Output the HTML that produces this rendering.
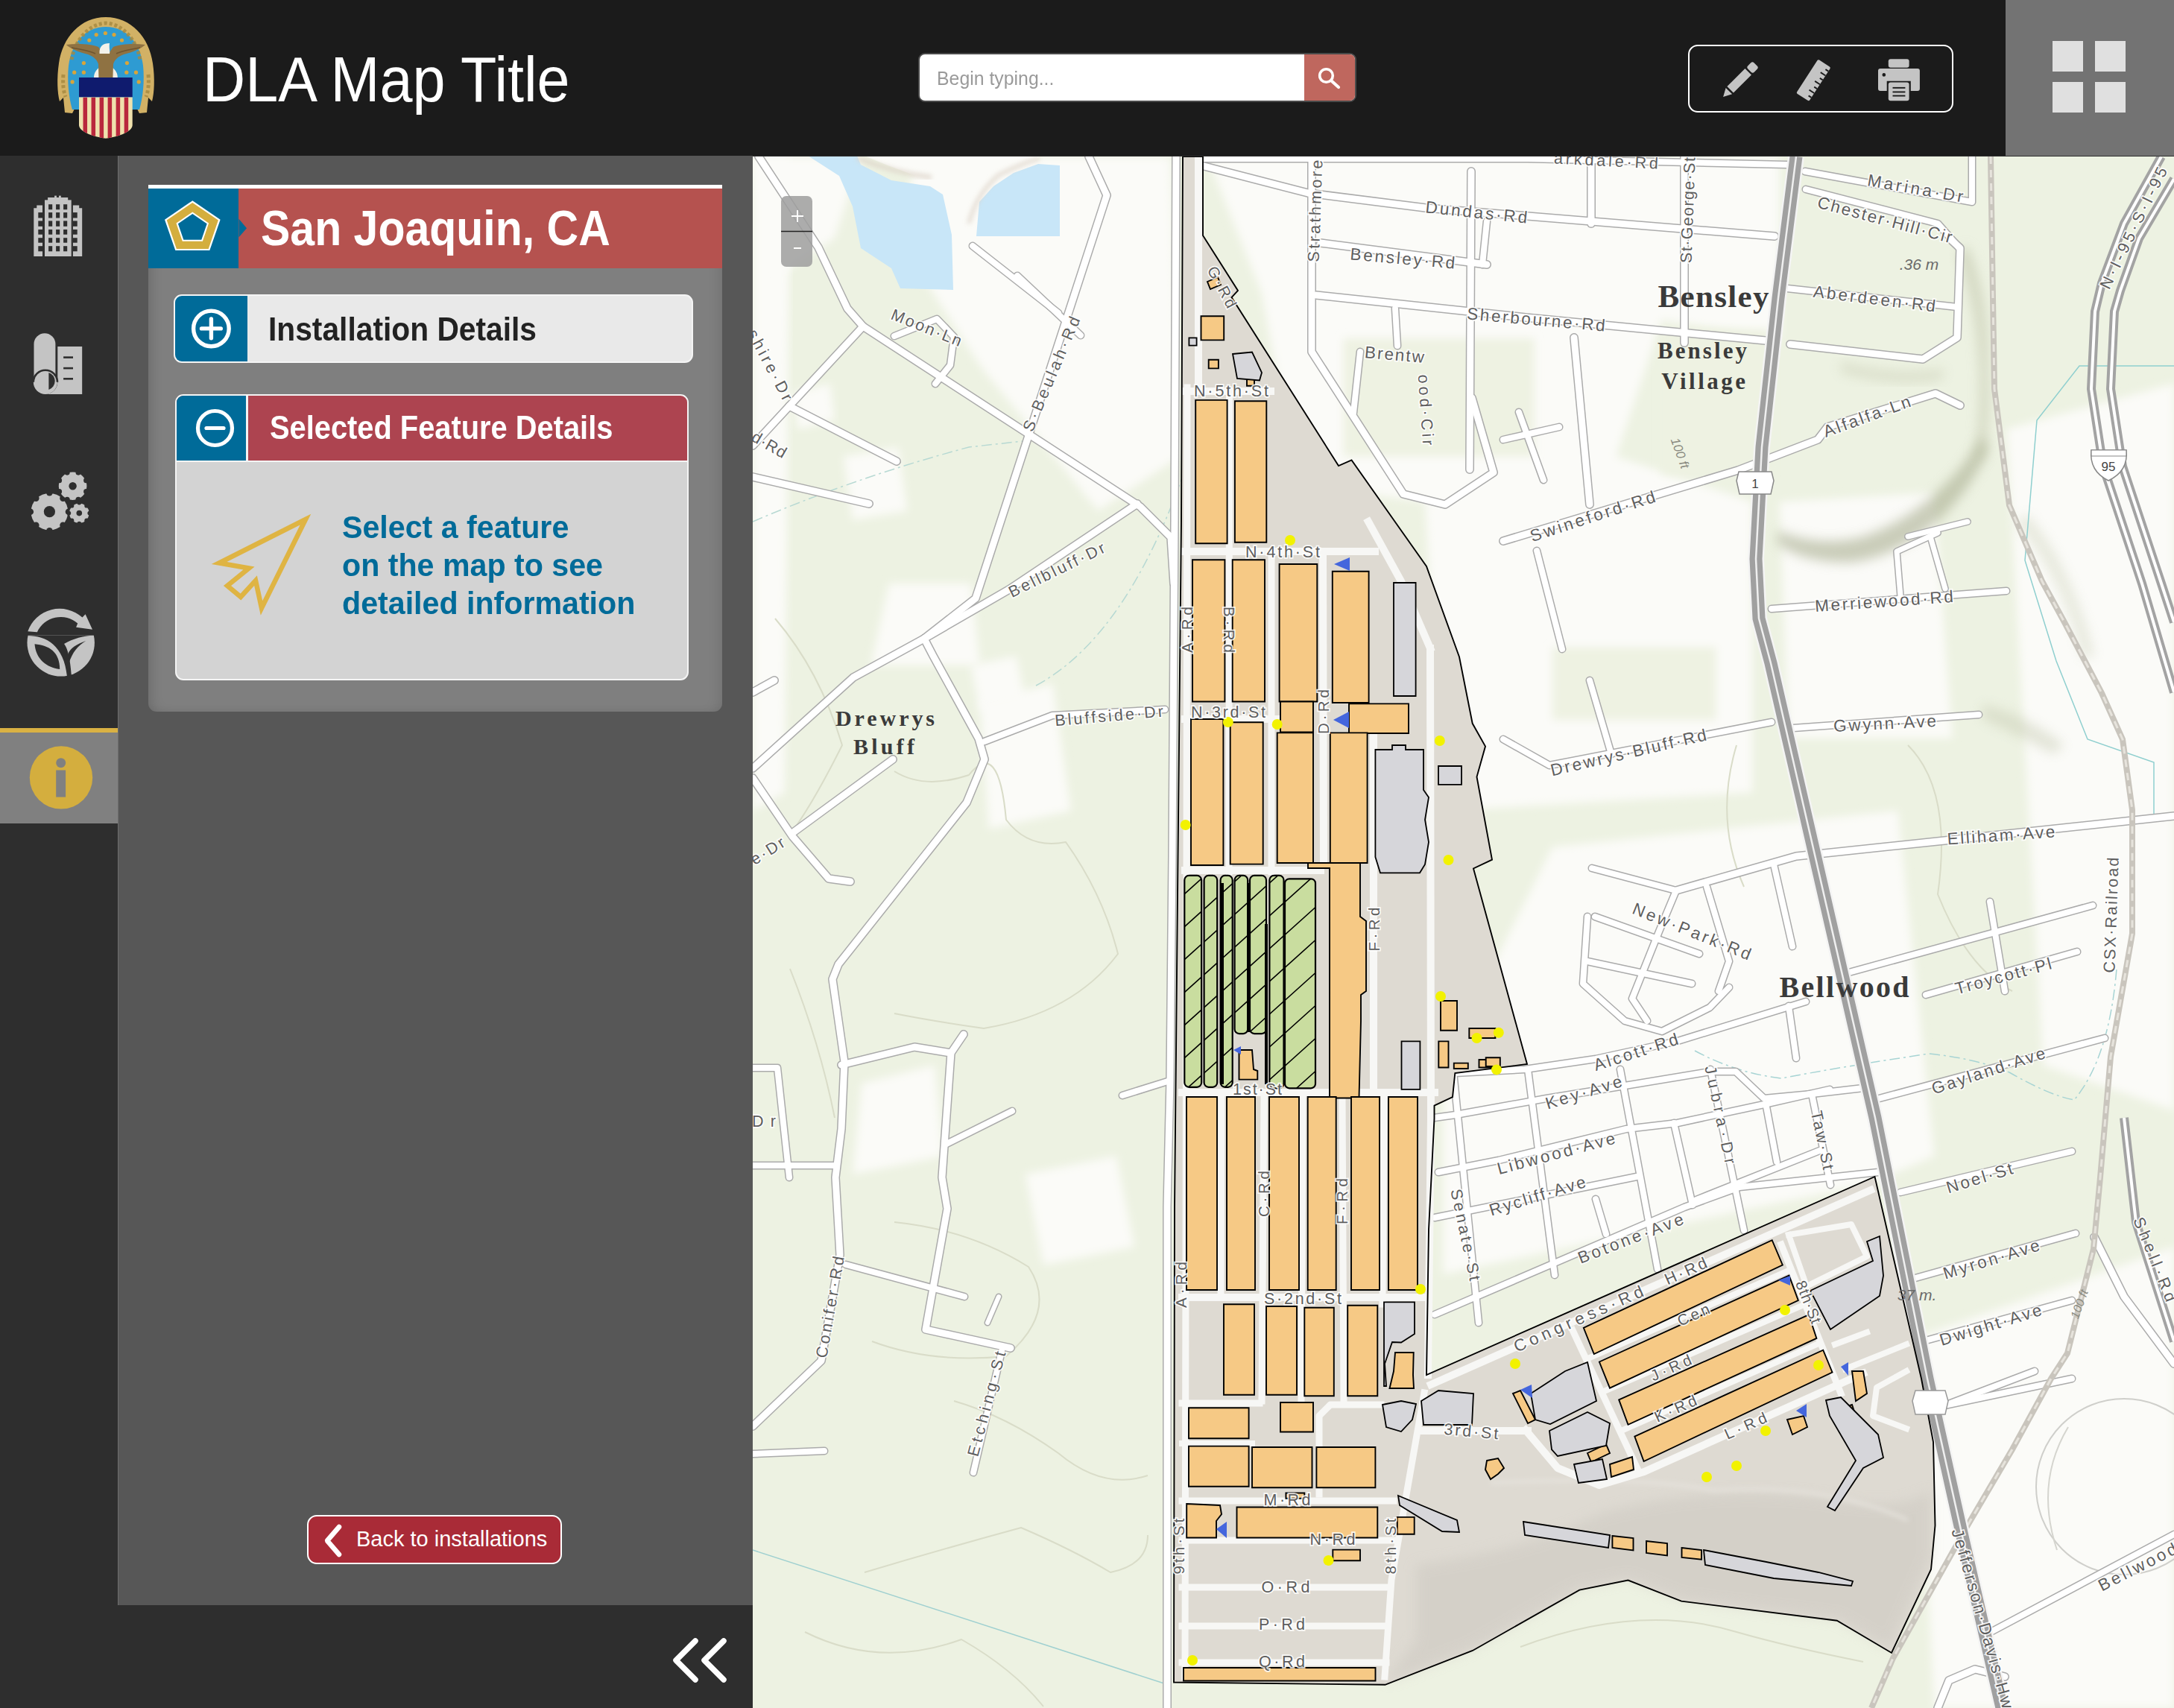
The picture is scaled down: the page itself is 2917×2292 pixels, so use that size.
<!DOCTYPE html>
<html><head><meta charset="utf-8">
<style>
*{margin:0;padding:0;box-sizing:border-box}
html,body{width:2917px;height:2292px;overflow:hidden;background:#2e2e2e;font-family:"Liberation Sans",sans-serif}
.abs{position:absolute}
#header{left:0;top:0;width:2691px;height:209px;background:#1b1b1b}
#grid{left:2691px;top:0;width:226px;height:209px;background:#737373}
#grid div{position:absolute;width:41px;height:41px;background:#e0e0e0}
#title{left:272px;top:56px;font-size:86px;color:#fff;white-space:nowrap;line-height:100px;transform:scaleX(0.92);transform-origin:0 0}
#search{left:1232px;top:71px;width:588px;height:66px;background:#fff;border:2px solid #4a4a4a;border-radius:9px;overflow:hidden}
#search .ph{position:absolute;left:22.6px;top:16px;font-size:25.5px;color:#9a9a9a;line-height:32px;white-space:nowrap;transform:scaleX(0.974);transform-origin:0 0}
#search .btn{position:absolute;right:0;top:0;width:68px;height:62px;background:#bf675e}
#tools{left:2265px;top:60px;width:356px;height:91px;border:2.5px solid #fff;border-radius:13px}
#sidebar{left:0;top:209px;width:158px;height:1945px;background:#2e2e2e}
#active{left:0;top:977px;width:158px;height:128px;background:#808080;border-top:6px solid #d9b143}
#panel{left:158px;top:209px;width:852px;height:1945px;background:#575757;border-left:1.5px solid #6e6e6e}
#card{left:199px;top:248px;width:770px;height:707px;background:#7f7f7f;border-radius:0 0 11px 11px;border-top:5px solid #fff;box-shadow:inset 10px 0 18px -8px rgba(0,0,0,0.18),inset -10px 0 18px -8px rgba(0,0,0,0.12)}
#cardhead{left:320px;top:253px;width:649px;height:107px;background:#b5524f}
#cardblue{left:199px;top:253px;width:121px;height:107px;background:#006b99}
#sanj{left:350px;top:266px;font-size:66px;font-weight:bold;color:#fff;white-space:nowrap;line-height:80px;transform:scaleX(0.894);transform-origin:0 0}
#inst{left:233px;top:395px;width:697px;height:92px;background:#e9e9e9;border:2px solid #f4f4f4;border-radius:11px;overflow:hidden}
#inst .blue{position:absolute;left:0;top:0;width:97px;height:100%;background:#006b99}
#inst .t{position:absolute;left:125px;top:20px;font-size:44px;font-weight:bold;color:#222;white-space:nowrap;line-height:50px;transform:scaleX(0.926);transform-origin:0 0}
#sel{left:235px;top:529px;width:689px;height:384px;background:#d3d3d3;border:2px solid #f4f4f4;border-radius:11px;overflow:hidden}
#sel .head{position:absolute;left:0;top:0;width:100%;height:89px;background:#ad4450;border-bottom:2px solid #f4f4f4}
#sel .blue{position:absolute;left:0;top:0;width:96px;height:87px;background:#006b99;border-right:3px solid #f4f4f4}
#sel .t{position:absolute;left:125px;top:18px;font-size:44px;font-weight:bold;color:#fff;white-space:nowrap;line-height:50px;transform:scaleX(0.905);transform-origin:0 0}
#seltext{left:459px;top:682px;font-size:42px;font-weight:bold;color:#006b99;line-height:51px;white-space:nowrap;transform:scaleX(0.98);transform-origin:0 0}
#back{left:412px;top:2033px;width:342px;height:66px;background:#a92b37;border:2.5px solid #fff;border-radius:13px}
#back .t{position:absolute;left:64px;top:14px;font-size:29px;color:#fff;white-space:nowrap;line-height:32px}
#map{left:1010px;top:210px;width:1907px;height:2082px;background:#f2f4ea;overflow:hidden}
</style></head><body>
<div id="header" class="abs"></div>
<div id="grid" class="abs">
  <div style="left:63px;top:55px"></div><div style="left:120px;top:55px"></div>
  <div style="left:63px;top:110px"></div><div style="left:120px;top:110px"></div>
</div>
<div id="title" class="abs">DLA Map Title</div>
<div id="search" class="abs"><div class="ph">Begin typing...</div><div class="btn"></div></div>
<div id="tools" class="abs"></div>
<div id="sidebar" class="abs"></div>
<div id="active" class="abs"></div>
<div id="panel" class="abs"></div>
<div id="card" class="abs"></div>
<div id="cardhead" class="abs"></div>
<div id="cardblue" class="abs"></div>
<div id="sanj" class="abs">San Joaquin, CA</div>
<div id="inst" class="abs"><div class="blue"></div><div class="t">Installation Details</div></div>
<div id="sel" class="abs"><div class="head"></div><div class="blue"></div><div class="t">Selected Feature Details</div></div>
<div id="seltext" class="abs">Select a feature<br>on the map to see<br>detailed information</div>
<div id="back" class="abs"><div class="t">Back to installations</div></div>
<div id="map" class="abs"><svg width="1907" height="2082" viewBox="1010 210 1907 2082" style="display:block"><defs><filter id="soft" x="-10%" y="-10%" width="120%" height="120%"><feGaussianBlur stdDeviation="6"/></filter><filter id="blur8" x="-20%" y="-20%" width="140%" height="140%"><feGaussianBlur stdDeviation="8"/></filter><filter id="blur3"><feGaussianBlur stdDeviation="3"/></filter></defs><rect x="1010" y="210" width="1907" height="2082" fill="#edf2e2"/><path d="M1010.0 210.0 L1058.8 210.0 L1058.8 356.3 L1052.7 1063.6 L1010.0 1087.9Z" fill="#fbfbf8" filter="url(#soft)"/><path d="M1010.0 210.0 L1156.3 210.0 L1119.7 319.7 L1046.6 368.5Z" fill="#fbfbf8" filter="url(#soft)"/><path d="M1229.5 210.0 L1570.9 210.0 L1583.1 612.4 L1473.4 685.6 L1314.8 490.5 L1205.1 319.7Z" fill="#fbfbf8" filter="url(#soft)"/><path d="M1064.9 527.0 L1113.6 514.8 L1119.7 563.6 L1071.0 575.8Z" fill="#fbfbf8" filter="url(#soft)"/><path d="M1131.9 612.4 L1205.1 600.2 L1217.3 685.6 L1144.1 697.7Z" fill="#fbfbf8" filter="url(#soft)"/><path d="M1302.6 892.8 L1363.6 880.6 L1375.8 941.6 L1314.8 953.8Z" fill="#fbfbf8" filter="url(#soft)"/><path d="M1192.9 783.1 L1302.6 783.1 L1314.8 892.8 L1168.5 892.8Z" fill="#fbfbf8" filter="url(#soft)"/><path d="M1619.7 210.0 L2387.9 210.0 L2387.9 453.9 L2229.4 429.5 L2168.4 612.4 L2351.3 673.4 L2351.3 1063.6 L1936.7 1087.9 L1912.3 673.4 L1741.6 649.0 L1692.8 392.9Z" fill="#fbfbf8" filter="url(#soft)"/><path d="M2387.9 673.4 L2595.2 661.2 L2619.6 990.4 L2400.1 990.4Z" fill="#fbfbf8" filter="url(#soft)"/><path d="M2083.0 1136.7 L2546.4 1087.9 L2595.2 1551.3 L2509.8 1587.9 L1936.7 1709.8 L1936.7 1429.4Z" fill="#fbfbf8" filter="url(#soft)"/><path d="M2692.7 575.8 L2917.1 514.8 L2917.1 1490.3 L2741.5 1429.4Z" fill="#fbfbf8" filter="url(#soft)"/><path d="M2570.8 1795.2 L2917.1 1673.2 L2917.1 2292.7 L2595.2 2292.7Z" fill="#fbfbf8" filter="url(#soft)"/><path d="M1156.3 1453.8 L1253.9 1429.4 L1266.1 1551.3 L1144.1 1575.7Z" fill="#fbfbf8" filter="url(#soft)"/><path d="M1375.8 1575.7 L1497.7 1551.3 L1522.1 1673.2 L1400.2 1697.6Z" fill="#fbfbf8" filter="url(#soft)"/><path d="M1314.8 941.6 L1412.4 917.2 L1436.8 1087.9 L1327.0 1112.3Z" fill="#fbfbf8" filter="url(#soft)"/><path d="M1802.6 453.9 L2058.7 453.9 L2058.7 612.4 L1802.6 612.4Z" fill="#eef2e2" filter="url(#soft)"/><path d="M2083.0 868.5 L2302.5 868.5 L2302.5 966.0 L2083.0 966.0Z" fill="#eef2e2" filter="url(#soft)"/><path d="M2229.4 441.7 L2375.7 441.7 L2375.7 636.8 L2229.4 636.8Z" fill="#eef2e2" filter="url(#soft)"/><path d="M2385 712 Q2440 735 2500 720 Q2560 700 2610 650 Q2640 620 2660 585 L2668 600 Q2650 650 2600 700 Q2540 750 2480 755 Q2420 755 2385 730Z" fill="#a9ae90" opacity="0.6" filter="url(#blur8)"/><path d="M2640 330 Q2670 400 2668 500 Q2672 560 2660 620 L2650 615 Q2660 540 2655 480 Q2650 400 2625 340Z" fill="#bfc3a8" opacity="0.55" filter="url(#blur8)"/><path d="M2470 485 Q2540 505 2610 495 L2605 510 Q2540 520 2470 500Z" fill="#c5c9b0" opacity="0.45" filter="url(#blur8)"/><path d="M2660 945 Q2720 960 2770 1000 L2755 1012 Q2705 985 2660 965Z" fill="#c5c9b0" opacity="0.45" filter="url(#blur8)"/><path d="M2720 690 Q2780 760 2810 880 L2795 885 Q2770 780 2705 700Z" fill="#cfd3bb" opacity="0.45" filter="url(#blur8)"/><path d="M1160 209 Q1230 240 1300 255 Q1350 250 1395 210Z" fill="#fbfbf8"/><path d="M1084 209 L1150 209 L1155 221 L1196 242 L1248 250 L1265 261 L1277 315 L1279 389 L1208 387 L1196 360 L1155 333 L1144 277 L1126 236Z" fill="#c8e6f8"/><path d="M1310 317 L1314 271 L1333 250 L1360 232 L1393 220 L1422 222 L1422 317Z" fill="#c8e6f8"/><path d="M1150 212 Q1200 232 1250 238" fill="none" stroke="#ddd3c8" stroke-width="6" opacity="0.8" filter="url(#blur3)"/><path d="M1300 300 Q1310 260 1340 235 Q1370 220 1395 212" fill="none" stroke="#ddd3c8" stroke-width="5" opacity="0.8" filter="url(#blur3)"/><path d="M1040 830 Q1100 900 1130 1000 Q1090 1080 1060 1120" fill="none" stroke="#d9dcc8" stroke-width="2"/><path d="M1200 1035 Q1240 1060 1300 1040 Q1340 990 1350 1100 Q1380 1140 1430 1130 Q1480 1200 1500 1280 Q1440 1360 1320 1380 Q1250 1370 1200 1360" fill="none" stroke="#d9dcc8" stroke-width="2"/><path d="M1060 1300 Q1100 1400 1120 1500" fill="none" stroke="#d9dcc8" stroke-width="2"/><path d="M1200 1640 Q1300 1650 1380 1700 Q1420 1760 1350 1820 Q1250 1830 1170 1800" fill="none" stroke="#d9dcc8" stroke-width="2"/><path d="M1280 1880 Q1350 1900 1420 1950 Q1480 2000 1540 1980" fill="none" stroke="#d9dcc8" stroke-width="2"/><path d="M1160 2110 Q1260 2080 1370 2050 Q1440 2080 1490 2110 Q1540 2100 1540 2060" fill="none" stroke="#d9dcc8" stroke-width="2"/><path d="M1080 2190 Q1180 2240 1290 2200 Q1360 2240 1400 2290" fill="none" stroke="#d9dcc8" stroke-width="2"/><path d="M2040 2210 Q2200 2150 2330 2190 Q2400 2210 2500 2230" fill="none" stroke="#d9dcc8" stroke-width="2"/><path d="M2330 1000 Q2300 1100 2340 1190" fill="none" stroke="#d9dcc8" stroke-width="2"/><path d="M2560 1000 Q2620 1060 2600 1200 Q2640 1300 2700 1330" fill="none" stroke="#d9dcc8" stroke-width="2"/><circle cx="2850" cy="1995" r="118" fill="none" stroke="#cfcfcb" stroke-width="2"/><path d="M2775 1915 Q2730 1990 2760 2080" fill="none" stroke="#d5d5cf" stroke-width="2"/><path d="M1010 2080 L1565 2260" fill="none" stroke="#9fd0d0" stroke-width="1.5"/><path d="M2274 1410 Q2330 1440 2390 1447 Q2480 1430 2588 1414 Q2650 1420 2696 1439 Q2750 1470 2783 1476 Q2830 1420 2840 1300" fill="none" stroke="#a7d4d4" stroke-width="1.5" stroke-dasharray="14 5 3 5"/><path d="M1390 920 Q1520 850 1600 600 L1610 500" fill="none" stroke="#b7d9d3" stroke-width="1.5" stroke-dasharray="14 5 3 5"/><path d="M1010 700 Q1150 640 1300 600 L1390 590" fill="none" stroke="#b7d9d3" stroke-width="1.5" stroke-dasharray="14 5 3 5"/><path d="M2917 491 L2790 491 L2733 564 L2717 752 L2759 887 L2801 992 L2890 1023 L2890 1100" fill="none" stroke="#8fcfcf" stroke-width="1.5"/><g fill="none" stroke="#ababab" stroke-linejoin="round" stroke-linecap="round"><path d="M1018.0 210.0 L1098.0 332.0 L1137.0 414.0 L1158.0 438.0" stroke-width="12"/><path d="M1158.0 438.0 L1530.0 680.0 L1571.0 721.0 L1575.0 783.0" stroke-width="12"/><path d="M1158.0 438.0 L1059.0 545.0 L1010.0 598.0" stroke-width="12"/><path d="M1059.0 545.0 L1203.0 619.0" stroke-width="12"/><path d="M1010.0 640.0 L1166.0 676.0" stroke-width="12"/><path d="M1461.0 210.0 L1485.0 262.0 L1309.0 803.0 L1240.0 857.0" stroke-width="12"/><path d="M1526.0 676.0 L1354.0 791.0 L1240.0 857.0" stroke-width="12"/><path d="M1240.0 857.0 L1145.0 909.0 L1010.0 1031.0" stroke-width="12"/><path d="M1010.0 929.0 L1039.0 913.0" stroke-width="12"/><path d="M1240.0 857.0 L1252.0 880.0 L1313.0 991.0 L1321.0 1019.0 L1297.0 1077.0 L1125.0 1294.0 L1117.0 1314.0 L1133.0 1425.0 L1129.0 1515.0 L1121.0 1580.0 L1127.0 1684.0 L1102.0 1826.0 L1010.0 1914.0" stroke-width="12"/><path d="M1321.0 995.0 L1412.0 960.0 L1563.0 952.0" stroke-width="11"/><path d="M1010.0 1044.0 L1063.0 1122.0 L1112.0 1179.0 L1141.0 1183.0" stroke-width="12"/><path d="M1063.0 1118.0 L1198.0 1019.0" stroke-width="12"/><path d="M1129.0 1429.0 L1227.0 1405.0 L1276.0 1413.0 L1293.0 1388.0" stroke-width="12"/><path d="M1276.0 1413.0 L1264.0 1580.0 L1271.0 1622.0 L1242.0 1784.0 L1356.0 1809.0" stroke-width="12"/><path d="M1268.0 1536.0 L1358.0 1491.0" stroke-width="11"/><path d="M1010.0 1433.0 L1043.0 1433.0 L1059.0 1580.0" stroke-width="11"/><path d="M1010.0 1564.0 L1121.0 1564.0" stroke-width="11"/><path d="M1344.0 1813.0 L1306.0 1976.0" stroke-width="11"/><path d="M1010.0 1951.0 L1106.0 1947.0" stroke-width="11"/><path d="M1135.0 1697.0 L1294.0 1740.0" stroke-width="11"/><path d="M1325.0 1775.0 L1340.0 1740.0" stroke-width="9"/><path d="M1200.0 451.0 L1257.0 428.0 L1280.0 452.0 L1275.0 490.0 L1255.0 515.0" stroke-width="11"/><path d="M1365.0 370.0 L1450.0 450.0" stroke-width="11"/><path d="M1305.0 330.0 L1420.0 420.0" stroke-width="11"/><path d="M1578.0 210.0 L1576.0 700.0 L1573.0 1150.0 L1570.0 1450.0 L1566.0 1620.0 L1566.0 2292.0" stroke-width="12"/><path d="M1570.0 1450.0 L1506.0 1470.0" stroke-width="11"/><path d="M1613.0 213.0 L2050.0 213.0 L2398.0 221.0" stroke-width="11"/><path d="M1608.0 221.0 L1755.0 259.0 L1913.0 279.0 L2050.0 290.0 L2381.0 317.0" stroke-width="12"/><path d="M1760.0 209.0 L1760.0 472.0 L1883.0 663.0 L1939.0 677.0 L2004.0 634.0 L1975.0 534.0" stroke-width="12"/><path d="M1772.0 326.0 L1995.0 355.0" stroke-width="12"/><path d="M1766.0 396.0 L2047.0 426.0 L2369.0 457.0" stroke-width="12"/><path d="M2402.0 462.0 L2580.0 482.0 L2626.0 453.0 L2630.0 333.0 L2617.0 321.0" stroke-width="12"/><path d="M1872.0 414.0 L1875.0 464.0" stroke-width="11"/><path d="M1825.0 472.0 L1816.0 554.0" stroke-width="11"/><path d="M1974.0 230.0 L1972.0 630.0" stroke-width="12"/><path d="M1995.0 297.0 L1989.0 355.0" stroke-width="11"/><path d="M2135.0 210.0 L2135.0 300.0" stroke-width="12"/><path d="M2260.0 210.0 L2260.0 460.0" stroke-width="12"/><path d="M2112.0 453.0 L2133.0 677.0" stroke-width="12"/><path d="M2017.0 726.0 L2332.0 631.0 L2439.0 590.0 L2452.0 573.0 L2597.0 528.0 L2630.0 544.0" stroke-width="12"/><path d="M2377.0 817.0 L2692.0 793.0" stroke-width="11"/><path d="M2422.0 230.0 L2646.0 271.0 L2646.0 210.0" stroke-width="11"/><path d="M2423.0 254.0 L2600.0 300.0 L2629.0 333.0" stroke-width="11"/><path d="M2398.0 387.0 L2626.0 412.0" stroke-width="11"/><path d="M2017.0 590.0 L2092.0 573.0" stroke-width="11"/><path d="M2038.0 553.0 L2071.0 644.0" stroke-width="11"/><path d="M2062.0 739.0 L2096.0 871.0" stroke-width="11"/><path d="M2560.0 720.0 L2640.0 700.0" stroke-width="10"/><path d="M2550.0 800.0 L2545.0 740.0 L2600.0 715.0" stroke-width="10"/><path d="M2590.0 720.0 L2610.0 790.0" stroke-width="10"/><path d="M2017.0 992.0 L2079.0 1027.0 L2377.0 969.0" stroke-width="11"/><path d="M2406.0 977.0 L2655.0 959.0" stroke-width="11"/><path d="M2133.0 913.0 L2162.0 1012.0" stroke-width="11"/><path d="M2249.0 1195.0 L2410.0 1149.0 L2609.0 1128.0 L2917.0 1095.0" stroke-width="12"/><path d="M1952.0 1440.0 L2046.0 1435.0 L2141.0 1421.0 L2251.0 1397.0 L2423.0 1344.0" stroke-width="11"/><path d="M1924.0 1500.0 L1953.0 1496.0 L2075.0 1474.0 L2180.0 1457.0 L2295.0 1438.0 L2329.0 1438.0 L2367.0 1474.0 L2431.0 1468.0 L2500.0 1460.0" stroke-width="11"/><path d="M1930.0 1573.0 L2011.0 1557.0 L2182.0 1515.0 L2251.0 1507.0 L2367.0 1482.0 L2455.0 1462.0" stroke-width="11"/><path d="M1925.0 1634.0 L2196.0 1579.0" stroke-width="11"/><path d="M2276.0 1610.0 L2444.0 1543.0" stroke-width="11"/><path d="M1925.0 1764.0 L2260.0 1620.0 L2334.0 1593.0 L2520.0 1573.0" stroke-width="11"/><path d="M1950.0 1438.0 L1984.0 1775.0" stroke-width="11"/><path d="M2050.0 1435.0 L2086.0 1711.0" stroke-width="11"/><path d="M2174.0 1435.0 L2224.0 1703.0" stroke-width="11"/><path d="M2295.0 1435.0 L2340.0 1651.0" stroke-width="11"/><path d="M2431.0 1468.0 L2456.0 1590.0" stroke-width="11"/><path d="M2246.0 1507.0 L2271.0 1617.0" stroke-width="11"/><path d="M2370.0 1485.0 L2384.0 1559.0" stroke-width="11"/><path d="M2141.0 1609.0 L2155.0 1656.0" stroke-width="11"/><path d="M2477.0 1306.0 L2808.0 1215.0" stroke-width="11"/><path d="M2584.0 1335.0 L2787.0 1277.0" stroke-width="11"/><path d="M2514.0 1476.0 L2824.0 1393.0" stroke-width="11"/><path d="M2136.0 1165.0 L2249.0 1195.0" stroke-width="11"/><path d="M2249.0 1195.0 L2226.0 1250.0 L2190.0 1340.0 L2210.0 1370.0" stroke-width="11"/><path d="M2290.0 1190.0 L2320.0 1290.0 L2306.0 1330.0" stroke-width="11"/><path d="M2380.0 1160.0 L2405.0 1270.0" stroke-width="11"/><path d="M2140.0 1230.0 L2280.0 1280.0" stroke-width="11"/><path d="M2130.0 1290.0 L2270.0 1320.0" stroke-width="11"/><path d="M2130.0 1230.0 L2124.0 1320.0 L2180.0 1370.0 L2230.0 1384.0 L2294.0 1352.0 L2320.0 1325.0" stroke-width="11"/><path d="M2400.0 1350.0 L2410.0 1420.0" stroke-width="11"/><path d="M2550.0 1600.0 L2780.0 1545.0" stroke-width="11"/><path d="M2570.0 1715.0 L2785.0 1655.0" stroke-width="11"/><path d="M2580.0 1800.0 L2780.0 1745.0" stroke-width="11"/><path d="M2612.0 1885.0 L2730.0 1840.0" stroke-width="11"/><path d="M2673.0 2189.0 L2917.0 2059.0" stroke-width="11"/><path d="M2609.0 1886.0 L2780.0 1850.0" stroke-width="11"/><path d="M2600.0 2292.0 L2615.0 2255.0 L2650.0 2240.0 L2690.0 2250.0" stroke-width="12"/><path d="M2670.0 1210.0 L2690.0 1330.0" stroke-width="11"/><path d="M2810.0 1660.0 L2850.0 1740.0 L2917.0 1830.0" stroke-width="12"/></g><g fill="none" stroke="#ffffff" stroke-linejoin="round" stroke-linecap="round"><path d="M1018.0 210.0 L1098.0 332.0 L1137.0 414.0 L1158.0 438.0" stroke-width="9"/><path d="M1158.0 438.0 L1530.0 680.0 L1571.0 721.0 L1575.0 783.0" stroke-width="9"/><path d="M1158.0 438.0 L1059.0 545.0 L1010.0 598.0" stroke-width="9"/><path d="M1059.0 545.0 L1203.0 619.0" stroke-width="9"/><path d="M1010.0 640.0 L1166.0 676.0" stroke-width="9"/><path d="M1461.0 210.0 L1485.0 262.0 L1309.0 803.0 L1240.0 857.0" stroke-width="9"/><path d="M1526.0 676.0 L1354.0 791.0 L1240.0 857.0" stroke-width="9"/><path d="M1240.0 857.0 L1145.0 909.0 L1010.0 1031.0" stroke-width="9"/><path d="M1010.0 929.0 L1039.0 913.0" stroke-width="9"/><path d="M1240.0 857.0 L1252.0 880.0 L1313.0 991.0 L1321.0 1019.0 L1297.0 1077.0 L1125.0 1294.0 L1117.0 1314.0 L1133.0 1425.0 L1129.0 1515.0 L1121.0 1580.0 L1127.0 1684.0 L1102.0 1826.0 L1010.0 1914.0" stroke-width="9"/><path d="M1321.0 995.0 L1412.0 960.0 L1563.0 952.0" stroke-width="8"/><path d="M1010.0 1044.0 L1063.0 1122.0 L1112.0 1179.0 L1141.0 1183.0" stroke-width="9"/><path d="M1063.0 1118.0 L1198.0 1019.0" stroke-width="9"/><path d="M1129.0 1429.0 L1227.0 1405.0 L1276.0 1413.0 L1293.0 1388.0" stroke-width="9"/><path d="M1276.0 1413.0 L1264.0 1580.0 L1271.0 1622.0 L1242.0 1784.0 L1356.0 1809.0" stroke-width="9"/><path d="M1268.0 1536.0 L1358.0 1491.0" stroke-width="8"/><path d="M1010.0 1433.0 L1043.0 1433.0 L1059.0 1580.0" stroke-width="8"/><path d="M1010.0 1564.0 L1121.0 1564.0" stroke-width="8"/><path d="M1344.0 1813.0 L1306.0 1976.0" stroke-width="8"/><path d="M1010.0 1951.0 L1106.0 1947.0" stroke-width="8"/><path d="M1135.0 1697.0 L1294.0 1740.0" stroke-width="8"/><path d="M1325.0 1775.0 L1340.0 1740.0" stroke-width="6"/><path d="M1200.0 451.0 L1257.0 428.0 L1280.0 452.0 L1275.0 490.0 L1255.0 515.0" stroke-width="8"/><path d="M1365.0 370.0 L1450.0 450.0" stroke-width="8"/><path d="M1305.0 330.0 L1420.0 420.0" stroke-width="8"/><path d="M1578.0 210.0 L1576.0 700.0 L1573.0 1150.0 L1570.0 1450.0 L1566.0 1620.0 L1566.0 2292.0" stroke-width="9"/><path d="M1570.0 1450.0 L1506.0 1470.0" stroke-width="8"/><path d="M1613.0 213.0 L2050.0 213.0 L2398.0 221.0" stroke-width="8"/><path d="M1608.0 221.0 L1755.0 259.0 L1913.0 279.0 L2050.0 290.0 L2381.0 317.0" stroke-width="9"/><path d="M1760.0 209.0 L1760.0 472.0 L1883.0 663.0 L1939.0 677.0 L2004.0 634.0 L1975.0 534.0" stroke-width="9"/><path d="M1772.0 326.0 L1995.0 355.0" stroke-width="9"/><path d="M1766.0 396.0 L2047.0 426.0 L2369.0 457.0" stroke-width="9"/><path d="M2402.0 462.0 L2580.0 482.0 L2626.0 453.0 L2630.0 333.0 L2617.0 321.0" stroke-width="9"/><path d="M1872.0 414.0 L1875.0 464.0" stroke-width="8"/><path d="M1825.0 472.0 L1816.0 554.0" stroke-width="8"/><path d="M1974.0 230.0 L1972.0 630.0" stroke-width="9"/><path d="M1995.0 297.0 L1989.0 355.0" stroke-width="8"/><path d="M2135.0 210.0 L2135.0 300.0" stroke-width="9"/><path d="M2260.0 210.0 L2260.0 460.0" stroke-width="9"/><path d="M2112.0 453.0 L2133.0 677.0" stroke-width="9"/><path d="M2017.0 726.0 L2332.0 631.0 L2439.0 590.0 L2452.0 573.0 L2597.0 528.0 L2630.0 544.0" stroke-width="9"/><path d="M2377.0 817.0 L2692.0 793.0" stroke-width="8"/><path d="M2422.0 230.0 L2646.0 271.0 L2646.0 210.0" stroke-width="8"/><path d="M2423.0 254.0 L2600.0 300.0 L2629.0 333.0" stroke-width="8"/><path d="M2398.0 387.0 L2626.0 412.0" stroke-width="8"/><path d="M2017.0 590.0 L2092.0 573.0" stroke-width="8"/><path d="M2038.0 553.0 L2071.0 644.0" stroke-width="8"/><path d="M2062.0 739.0 L2096.0 871.0" stroke-width="8"/><path d="M2560.0 720.0 L2640.0 700.0" stroke-width="7"/><path d="M2550.0 800.0 L2545.0 740.0 L2600.0 715.0" stroke-width="7"/><path d="M2590.0 720.0 L2610.0 790.0" stroke-width="7"/><path d="M2017.0 992.0 L2079.0 1027.0 L2377.0 969.0" stroke-width="8"/><path d="M2406.0 977.0 L2655.0 959.0" stroke-width="8"/><path d="M2133.0 913.0 L2162.0 1012.0" stroke-width="8"/><path d="M2249.0 1195.0 L2410.0 1149.0 L2609.0 1128.0 L2917.0 1095.0" stroke-width="9"/><path d="M1952.0 1440.0 L2046.0 1435.0 L2141.0 1421.0 L2251.0 1397.0 L2423.0 1344.0" stroke-width="8"/><path d="M1924.0 1500.0 L1953.0 1496.0 L2075.0 1474.0 L2180.0 1457.0 L2295.0 1438.0 L2329.0 1438.0 L2367.0 1474.0 L2431.0 1468.0 L2500.0 1460.0" stroke-width="8"/><path d="M1930.0 1573.0 L2011.0 1557.0 L2182.0 1515.0 L2251.0 1507.0 L2367.0 1482.0 L2455.0 1462.0" stroke-width="8"/><path d="M1925.0 1634.0 L2196.0 1579.0" stroke-width="8"/><path d="M2276.0 1610.0 L2444.0 1543.0" stroke-width="8"/><path d="M1925.0 1764.0 L2260.0 1620.0 L2334.0 1593.0 L2520.0 1573.0" stroke-width="8"/><path d="M1950.0 1438.0 L1984.0 1775.0" stroke-width="8"/><path d="M2050.0 1435.0 L2086.0 1711.0" stroke-width="8"/><path d="M2174.0 1435.0 L2224.0 1703.0" stroke-width="8"/><path d="M2295.0 1435.0 L2340.0 1651.0" stroke-width="8"/><path d="M2431.0 1468.0 L2456.0 1590.0" stroke-width="8"/><path d="M2246.0 1507.0 L2271.0 1617.0" stroke-width="8"/><path d="M2370.0 1485.0 L2384.0 1559.0" stroke-width="8"/><path d="M2141.0 1609.0 L2155.0 1656.0" stroke-width="8"/><path d="M2477.0 1306.0 L2808.0 1215.0" stroke-width="8"/><path d="M2584.0 1335.0 L2787.0 1277.0" stroke-width="8"/><path d="M2514.0 1476.0 L2824.0 1393.0" stroke-width="8"/><path d="M2136.0 1165.0 L2249.0 1195.0" stroke-width="8"/><path d="M2249.0 1195.0 L2226.0 1250.0 L2190.0 1340.0 L2210.0 1370.0" stroke-width="8"/><path d="M2290.0 1190.0 L2320.0 1290.0 L2306.0 1330.0" stroke-width="8"/><path d="M2380.0 1160.0 L2405.0 1270.0" stroke-width="8"/><path d="M2140.0 1230.0 L2280.0 1280.0" stroke-width="8"/><path d="M2130.0 1290.0 L2270.0 1320.0" stroke-width="8"/><path d="M2130.0 1230.0 L2124.0 1320.0 L2180.0 1370.0 L2230.0 1384.0 L2294.0 1352.0 L2320.0 1325.0" stroke-width="8"/><path d="M2400.0 1350.0 L2410.0 1420.0" stroke-width="8"/><path d="M2550.0 1600.0 L2780.0 1545.0" stroke-width="8"/><path d="M2570.0 1715.0 L2785.0 1655.0" stroke-width="8"/><path d="M2580.0 1800.0 L2780.0 1745.0" stroke-width="8"/><path d="M2612.0 1885.0 L2730.0 1840.0" stroke-width="8"/><path d="M2673.0 2189.0 L2917.0 2059.0" stroke-width="8"/><path d="M2609.0 1886.0 L2780.0 1850.0" stroke-width="8"/><path d="M2600.0 2292.0 L2615.0 2255.0 L2650.0 2240.0 L2690.0 2250.0" stroke-width="9"/><path d="M2670.0 1210.0 L2690.0 1330.0" stroke-width="8"/><path d="M2810.0 1660.0 L2850.0 1740.0 L2917.0 1830.0" stroke-width="9"/></g><path d="M2671.0 210.0 L2674.0 400.0 L2676.0 522.0 L2696.0 678.0 L2740.0 780.0 L2770.0 835.0 L2820.0 930.0 L2848.0 992.0 L2861.0 1087.0 L2861.0 1253.0 L2832.0 1418.0 L2818.0 1580.0 L2809.0 1676.0 L2774.0 1816.0 L2752.0 1850.0 L2700.0 1945.0 L2640.0 2047.0 L2540.0 2225.0 L2511.0 2292.0" fill="none" stroke="#c9c5bd" stroke-width="8"/><path d="M2671.0 210.0 L2674.0 400.0 L2676.0 522.0 L2696.0 678.0 L2740.0 780.0 L2770.0 835.0 L2820.0 930.0 L2848.0 992.0 L2861.0 1087.0 L2861.0 1253.0 L2832.0 1418.0 L2818.0 1580.0 L2809.0 1676.0 L2774.0 1816.0 L2752.0 1850.0 L2700.0 1945.0 L2640.0 2047.0 L2540.0 2225.0 L2511.0 2292.0" fill="none" stroke="#e6e3dc" stroke-width="3" stroke-dasharray="10 8"/><path d="M2900.0 210.0 L2850.0 300.0 L2820.0 380.0 L2811.0 418.0 L2806.0 522.0 L2822.0 626.0 L2874.0 783.0 L2917.0 929.0" fill="none" stroke="#a3a3a3" stroke-width="12"/><path d="M2900.0 210.0 L2850.0 300.0 L2820.0 380.0 L2811.0 418.0 L2806.0 522.0 L2822.0 626.0 L2874.0 783.0 L2917.0 929.0" fill="none" stroke="#ffffff" stroke-width="4"/><path d="M2917.0 240.0 L2870.0 320.0 L2845.0 390.0 L2837.0 418.0 L2832.0 522.0 L2848.0 626.0 L2900.0 783.0 L2917.0 835.0" fill="none" stroke="#a3a3a3" stroke-width="12"/><path d="M2917.0 240.0 L2870.0 320.0 L2845.0 390.0 L2837.0 418.0 L2832.0 522.0 L2848.0 626.0 L2900.0 783.0 L2917.0 835.0" fill="none" stroke="#ffffff" stroke-width="4"/><path d="M2850.0 1500.0 L2866.0 1640.0 L2917.0 1800.0" fill="none" stroke="#a3a3a3" stroke-width="12"/><path d="M2850.0 1500.0 L2866.0 1640.0 L2917.0 1800.0" fill="none" stroke="#ffffff" stroke-width="4"/><path d="M2410.0 210.0 L2386.0 400.0 L2364.0 600.0 L2356.0 750.0 L2360.0 830.0 L2376.0 890.0 L2516.0 1500.0 L2531.0 1575.0 L2586.0 1850.0 L2632.0 2057.0 L2686.0 2292.0" fill="none" stroke="#f4f4f4" stroke-width="22" stroke-linejoin="round"/><path d="M2410.0 210.0 L2386.0 400.0 L2364.0 600.0 L2356.0 750.0 L2360.0 830.0 L2376.0 890.0 L2516.0 1500.0 L2531.0 1575.0 L2586.0 1850.0 L2632.0 2057.0 L2686.0 2292.0" fill="none" stroke="#a0a0a0" stroke-width="17" stroke-linejoin="round"/><path d="M2410.0 210.0 L2386.0 400.0 L2364.0 600.0 L2356.0 750.0 L2360.0 830.0 L2376.0 890.0 L2516.0 1500.0 L2531.0 1575.0 L2586.0 1850.0 L2632.0 2057.0 L2686.0 2292.0" fill="none" stroke="#efefef" stroke-width="2.5" stroke-linejoin="round"/><path d="M1587.0 210.0 L1614.0 210.0 L1614.0 316.0 L1661.0 390.0 L1652.5 399.0 L1796.0 625.0 L1813.5 617.4 L1878.0 709.0 L1914.0 760.0 L1958.0 881.5 L1975.7 970.8 L1993.0 1001.5 L1981.5 1042.5 L2002.0 1153.7 L1977.0 1165.5 L2049.0 1428.0 L1952.3 1440.0 L1949.0 1472.0 L1924.5 1483.7 L1924.5 1501.0 L1917.0 1650.0 L1914.0 1845.0 L2515.5 1579.0 L2578.0 1850.0 L2594.0 1935.0 L2596.5 2047.0 L2591.0 2106.0 L2538.0 2218.0 L2464.8 2174.7 L2256.0 2148.6 L2184.5 2120.6 L2119.3 2133.6 L1975.9 2215.0 L1858.5 2260.8 L1575.0 2257.5 L1576.0 1620.0 L1580.5 1150.0 L1585.0 700.0Z" fill="#dedad2" stroke="none"/><path d="M1900 2100 Q2050 2080 2150 2030 Q2300 1990 2450 2010 Q2550 2030 2590 2000 L2590 2090 L2536 2212 L2465 2172 L2256 2146 L2184 2118 L2119 2131 L1976 2212 L1859 2258 L1900 2200Z" fill="#cfcbc3" opacity="0.6" filter="url(#blur8)"/><path d="M2000 1990 Q2200 1980 2300 2000 Q2450 1990 2560 2040" fill="none" stroke="#e6e3dd" stroke-width="4" filter="url(#blur3)"/><g fill="none" stroke="#f7f7f5" stroke-linejoin="round" stroke-linecap="square"><path d="M1608.0 210.0 L1608.0 520.0" stroke-width="10"/><path d="M1593.0 520.0 L1592.0 1170.0 L1590.0 2250.0" stroke-width="9"/><path d="M1649.5 530.0 L1649.0 1170.0" stroke-width="9"/><path d="M1639.0 1466.0 L1638.0 1740.0" stroke-width="9"/><path d="M1706.0 740.0 L1706.0 1170.0" stroke-width="9"/><path d="M1696.0 1466.0 L1693.0 1880.0" stroke-width="9"/><path d="M1775.0 745.0 L1776.0 1160.0" stroke-width="10"/><path d="M1748.0 1466.0 L1746.0 1880.0" stroke-width="9"/><path d="M1843.0 984.0 L1843.0 1460.0" stroke-width="10"/><path d="M1801.0 1466.0 L1803.0 1880.0" stroke-width="9"/><path d="M1857.0 1466.0 L1855.0 1750.0" stroke-width="9"/><path d="M1919.0 870.0 L1920.0 1500.0 L1916.0 1845.0" stroke-width="10"/><path d="M1836.0 700.0 L1880.0 780.0 L1919.0 870.0" stroke-width="10"/><path d="M1590.0 525.0 L1705.0 525.0" stroke-width="10"/><path d="M1590.0 740.0 L1845.0 740.0" stroke-width="10"/><path d="M1590.0 965.0 L1712.0 965.0" stroke-width="10"/><path d="M1590.0 1168.0 L1772.0 1168.0" stroke-width="10"/><path d="M1586.0 1466.0 L1925.0 1466.0" stroke-width="10"/><path d="M1586.0 1741.0 L1910.0 1741.0" stroke-width="10"/><path d="M1586.0 1883.0 L1690.0 1883.0" stroke-width="9"/><path d="M1770.0 2005.0 L1770.0 1900.0 L1785.0 1885.0 L1853.0 1885.0" stroke-width="9"/><path d="M1586.0 1937.0 L1680.0 1937.0" stroke-width="8"/><path d="M1586.0 2014.0 L1870.0 2014.0" stroke-width="9"/><path d="M1586.0 2067.0 L1870.0 2067.0" stroke-width="9"/><path d="M1586.0 2130.0 L1860.0 2130.0" stroke-width="9"/><path d="M1586.0 2182.0 L1860.0 2182.0" stroke-width="9"/><path d="M1586.0 2231.0 L1860.0 2231.0" stroke-width="9"/><path d="M1911.0 1869.0 L1867.0 2120.0 L1858.0 2250.0" stroke-width="9"/><path d="M1920.0 1858.0 L2510.0 1597.0" stroke-width="10"/><path d="M2110.0 1785.0 L2199.0 1975.0" stroke-width="9"/><path d="M2390.0 1670.0 L2470.0 1870.0" stroke-width="9"/><path d="M1910.0 1920.0 L2050.0 1920.0" stroke-width="10"/><path d="M2047.0 1919.0 L2090.0 1970.0 L2146.0 1993.0 L2206.0 1975.0 L2500.0 1843.0" stroke-width="10"/><path d="M2133.0 1822.0 L2400.0 1705.0" stroke-width="8"/><path d="M2150.0 1868.0 L2418.0 1752.0" stroke-width="8"/><path d="M2180.0 1918.0 L2440.0 1803.0" stroke-width="8"/><path d="M2400.0 1657.0 L2484.0 1643.0 L2505.0 1686.0 L2424.0 1726.0 L2400.0 1657.0" stroke-width="8"/><path d="M2462.0 1804.0 L2505.0 1788.0" stroke-width="8"/><path d="M2476.0 1837.0 L2558.0 1804.0" stroke-width="8"/><path d="M2558.0 1840.0 L2518.0 1862.0 L2513.0 1900.0 L2558.0 1917.0" stroke-width="8"/></g><path d="M1587.0 210.0 L1614.0 210.0 L1614.0 316.0 L1661.0 390.0 L1652.5 399.0 L1796.0 625.0 L1813.5 617.4 L1878.0 709.0 L1914.0 760.0 L1958.0 881.5 L1975.7 970.8 L1993.0 1001.5 L1981.5 1042.5 L2002.0 1153.7 L1977.0 1165.5 L2049.0 1428.0 L1952.3 1440.0 L1949.0 1472.0 L1924.5 1483.7 L1924.5 1501.0 L1917.0 1650.0 L1914.0 1845.0 L2515.5 1579.0 L2578.0 1850.0 L2594.0 1935.0 L2596.5 2047.0 L2591.0 2106.0 L2538.0 2218.0 L2464.8 2174.7 L2256.0 2148.6 L2184.5 2120.6 L2119.3 2133.6 L1975.9 2215.0 L1858.5 2260.8 L1575.0 2257.5 L1576.0 1620.0 L1580.5 1150.0 L1585.0 700.0Z" fill="none" stroke="#000" stroke-width="1.9" stroke-linejoin="miter"/><g fill="#f6c985" stroke="#000" stroke-width="1.9" stroke-linejoin="miter"><path d="M1611.5 424.2 L1642.2 424.2 L1642.2 456.4 L1611.5 456.4Z"/><path d="M1621.7 482.7 L1634.9 482.7 L1634.9 494.4 L1621.7 494.4Z"/><path d="M1673.0 507.6 L1683.0 507.6 L1683.0 517.8 L1673.0 517.8Z"/><path d="M1620.0 378.0 L1634.0 372.0 L1638.0 382.0 L1624.0 388.0Z"/><path d="M1604.2 536.9 L1646.6 536.9 L1646.6 729.3 L1604.2 729.3Z"/><path d="M1656.9 538.3 L1699.3 538.3 L1699.3 727.8 L1656.9 727.8Z"/><path d="M1600.0 751.2 L1643.4 751.2 L1643.4 941.5 L1600.0 941.5Z"/><path d="M1653.7 751.2 L1697.0 751.2 L1697.0 941.5 L1653.7 941.5Z"/><path d="M1716.6 757.0 L1767.3 757.0 L1767.3 941.5 L1716.6 941.5Z"/><path d="M1787.8 766.7 L1836.6 766.7 L1836.6 943.0 L1787.8 943.0Z"/><path d="M1718.0 941.5 L1762.0 941.5 L1762.0 982.5 L1718.0 982.5Z"/><path d="M1810.0 944.4 L1890.0 944.4 L1890.0 984.0 L1810.0 984.0Z"/><path d="M1598.0 965.0 L1641.4 965.0 L1641.4 1161.0 L1598.0 1161.0Z"/><path d="M1650.7 969.3 L1694.7 969.3 L1694.7 1159.6 L1650.7 1159.6Z"/><path d="M1713.7 983.4 L1762.0 983.4 L1762.0 1158.0 L1713.7 1158.0Z"/><path d="M1784.8 983.4 L1834.6 983.4 L1834.6 1158.0 L1784.8 1158.0Z"/><path d="M1755.0 1158.0 L1825.0 1158.0 L1825.0 1230.0 L1833.0 1236.0 L1833.0 1330.0 L1826.0 1335.0 L1826.0 1370.0 L1823.5 1473.5 L1784.0 1473.5 L1784.0 1165.0 L1755.0 1165.0Z"/><path d="M1592.0 1472.0 L1633.0 1472.0 L1633.0 1731.0 L1592.0 1731.0Z"/><path d="M1646.0 1472.0 L1684.0 1472.0 L1684.0 1731.0 L1646.0 1731.0Z"/><path d="M1703.0 1472.0 L1743.0 1472.0 L1743.0 1731.0 L1703.0 1731.0Z"/><path d="M1754.7 1472.0 L1792.7 1472.0 L1792.7 1731.0 L1754.7 1731.0Z"/><path d="M1813.0 1472.0 L1851.0 1472.0 L1851.0 1731.0 L1813.0 1731.0Z"/><path d="M1863.0 1472.0 L1902.0 1472.0 L1902.0 1731.0 L1863.0 1731.0Z"/><path d="M1642.0 1750.3 L1683.0 1750.3 L1683.0 1871.8 L1642.0 1871.8Z"/><path d="M1699.0 1753.0 L1740.0 1753.0 L1740.0 1871.8 L1699.0 1871.8Z"/><path d="M1750.3 1754.7 L1789.8 1754.7 L1789.8 1873.2 L1750.3 1873.2Z"/><path d="M1808.2 1751.7 L1848.3 1751.7 L1848.3 1873.2 L1808.2 1873.2Z"/><path d="M1872.0 1815.0 L1896.7 1815.0 L1896.0 1845.0 L1897.0 1863.0 L1864.5 1863.0 L1870.0 1840.0Z"/><path d="M1595.0 1889.3 L1675.6 1889.3 L1675.6 1930.3 L1595.0 1930.3Z"/><path d="M1718.0 1882.0 L1762.0 1882.0 L1762.0 1921.5 L1718.0 1921.5Z"/><path d="M1595.0 1940.6 L1675.6 1940.6 L1675.6 1994.7 L1595.0 1994.7Z"/><path d="M1680.0 1942.0 L1760.5 1942.0 L1760.5 1996.2 L1680.0 1996.2Z"/><path d="M1766.4 1942.0 L1845.4 1942.0 L1845.4 1996.2 L1766.4 1996.2Z"/><path d="M1725.4 2003.5 L1750.3 2003.5 L1750.3 2010.8 L1725.4 2010.8Z"/><path d="M1592.2 2018.0 L1637.0 2020.0 L1639.0 2032.0 L1632.0 2041.0 L1632.0 2063.5 L1592.2 2063.5Z"/><path d="M1659.5 2022.5 L1848.3 2022.5 L1848.3 2063.5 L1659.5 2063.5Z"/><path d="M1788.3 2079.6 L1825.0 2079.6 L1825.0 2094.2 L1788.3 2094.2Z"/><path d="M1874.8 2035.9 L1897.7 2035.9 L1897.7 2058.7 L1874.8 2058.7Z"/><path d="M1588.0 2238.0 L1845.5 2238.0 L1845.5 2255.5 L1588.0 2255.5Z"/><path d="M1933.0 1343.0 L1955.0 1343.0 L1955.0 1382.7 L1933.0 1382.7Z"/><path d="M1971.3 1380.0 L2006.4 1380.0 L2006.4 1393.0 L1971.3 1393.0Z"/><path d="M1930.3 1397.4 L1943.5 1397.4 L1943.5 1432.5 L1930.3 1432.5Z"/><path d="M1950.8 1426.6 L1969.8 1426.6 L1969.8 1434.0 L1950.8 1434.0Z"/><path d="M1984.5 1422.0 L2005.0 1422.0 L2005.0 1432.5 L1984.5 1432.5Z"/><path d="M1993.7 1419.3 L2012.8 1419.3 L2012.8 1431.0 L1993.7 1431.0Z"/><path d="M1662.5 1409.0 L1680.0 1409.0 L1682.0 1435.0 L1687.3 1437.0 L1687.3 1448.6 L1662.5 1448.6Z"/><path d="M1995.0 1960.0 L2010.0 1957.0 L2018.0 1970.0 L2010.0 1978.0 L2000.0 1985.0 L1993.0 1972.0Z"/><path d="M2163.4 2061.0 L2191.5 2064.0 L2191.5 2080.4 L2163.4 2077.0Z"/><path d="M2209.0 2068.0 L2237.0 2071.0 L2237.0 2087.4 L2209.0 2084.0Z"/><path d="M2256.5 2077.0 L2283.0 2080.0 L2283.0 2092.7 L2256.5 2090.0Z"/><path d="M2124.8 1781.8 L2377.7 1664.2 L2391.8 1697.5 L2138.8 1817.0Z"/><path d="M2145.9 1827.5 L2400.5 1711.6 L2412.8 1745.0 L2160.0 1862.6Z"/><path d="M2172.2 1878.4 L2426.9 1764.3 L2437.4 1795.9 L2184.5 1911.8Z"/><path d="M2193.3 1927.6 L2446.2 1811.7 L2458.5 1841.5 L2205.6 1961.0Z"/><path d="M2030.0 1870.0 L2040.0 1866.0 L2060.0 1905.0 L2050.0 1910.0Z"/><path d="M2060.0 1895.0 L2085.0 1880.0 L2090.0 1890.0 L2065.0 1905.0Z"/><path d="M2130.0 1950.0 L2155.0 1938.0 L2160.0 1950.0 L2135.0 1962.0Z"/><path d="M2160.0 1965.0 L2190.0 1955.0 L2192.0 1972.0 L2162.0 1982.0Z"/><path d="M2090.0 1866.0 L2110.0 1862.0 L2112.0 1878.0 L2092.0 1882.0Z"/><path d="M2398.0 1905.0 L2420.0 1900.0 L2425.0 1915.0 L2405.0 1925.0Z"/><path d="M2485.0 1840.0 L2500.0 1840.0 L2505.0 1870.0 L2490.0 1880.0Z"/><path d="M2470.0 1890.0 L2485.0 1885.0 L2498.0 1925.0 L2482.0 1930.0Z"/></g><g fill="#d6d6da" stroke="#000" stroke-width="1.8" stroke-linejoin="miter"><path d="M1870.0 782.0 L1899.6 782.0 L1899.6 934.0 L1870.0 934.0Z"/><path d="M1845.4 1006.0 L1868.0 1006.0 L1868.0 1000.0 L1886.0 1000.0 L1886.0 1006.0 L1910.0 1006.0 L1910.0 1060.0 L1917.0 1070.0 L1912.0 1100.0 L1917.0 1130.0 L1912.0 1160.0 L1905.0 1171.3 L1852.0 1171.3 L1845.4 1150.0Z"/><path d="M1880.5 1397.4 L1905.4 1397.4 L1905.4 1461.8 L1880.5 1461.8Z"/><path d="M1857.0 1747.3 L1898.0 1747.3 L1898.0 1790.0 L1880.0 1801.5 L1868.0 1801.0 L1858.0 1830.0 L1860.0 1860.0 L1857.0 1860.0Z"/><path d="M1855.0 1885.0 L1880.0 1880.0 L1900.0 1884.0 L1895.0 1905.0 L1880.0 1921.0 L1860.0 1915.0Z"/><path d="M1876.0 2007.0 L1955.0 2040.0 L1958.0 2056.0 L1935.0 2055.0 L1878.0 2020.0Z"/><path d="M2044.0 2042.0 L2160.0 2060.0 L2158.0 2077.0 L2046.0 2060.0Z"/><path d="M2286.0 2080.0 L2370.0 2096.0 L2440.0 2110.0 L2486.0 2122.0 L2484.0 2128.0 L2380.0 2118.0 L2288.0 2100.0Z"/><path d="M1907.0 1880.0 L1930.0 1866.0 L1977.0 1870.0 L1975.0 1912.0 L1910.0 1912.0Z"/><path d="M2054.0 1870.0 L2100.0 1840.0 L2130.0 1828.0 L2142.0 1880.0 L2080.0 1911.0 L2060.0 1905.0Z"/><path d="M2079.0 1920.0 L2130.0 1895.0 L2160.0 1910.0 L2155.0 1940.0 L2090.0 1954.0 L2082.0 1945.0Z"/><path d="M2112.0 1965.0 L2150.0 1958.0 L2156.0 1985.0 L2118.0 1990.0Z"/><path d="M2429.0 1732.0 L2513.0 1692.0 L2505.0 1666.0 L2522.0 1659.0 L2527.0 1712.0 L2522.0 1739.0 L2456.0 1784.0Z"/><path d="M2450.0 1879.0 L2470.0 1875.0 L2520.0 1925.0 L2527.0 1956.0 L2500.0 1970.0 L2462.0 2027.0 L2452.0 2022.0 L2490.0 1960.0 L2455.0 1900.0Z"/><path d="M1595.4 453.4 L1605.6 453.4 L1605.6 463.7 L1595.4 463.7Z"/><path d="M1654.0 475.0 L1680.0 472.5 L1693.0 500.0 L1690.0 510.5 L1660.0 508.0Z"/><path d="M1930.0 1028.0 L1961.0 1028.0 L1961.0 1052.8 L1930.0 1052.8Z"/></g><g fill="#c9dd9f" stroke="#000" stroke-width="2.2"><rect x="1589.3" y="1174.9" width="22.8" height="283.9" rx="6"/><rect x="1615.6" y="1174.9" width="17.6" height="283.9" rx="6"/><rect x="1637.6" y="1174.9" width="16.1" height="283.9" rx="6"/><rect x="1656.6" y="1174.9" width="17.6" height="212.2" rx="6"/><rect x="1677" y="1174.9" width="22.0" height="212.2" rx="6"/><rect x="1703.4" y="1174.9" width="19.1" height="285.4" rx="6"/><rect x="1724" y="1179.3" width="41.0" height="281.0" rx="6"/></g><clipPath id="hclip"><rect x="1589.3" y="1174.9" width="22.8" height="283.9" rx="6"/><rect x="1615.6" y="1174.9" width="17.6" height="283.9" rx="6"/><rect x="1637.6" y="1174.9" width="16.1" height="283.9" rx="6"/><rect x="1656.6" y="1174.9" width="17.6" height="212.2" rx="6"/><rect x="1677" y="1174.9" width="22.0" height="212.2" rx="6"/><rect x="1703.4" y="1174.9" width="19.1" height="285.4" rx="6"/><rect x="1724" y="1179.3" width="41.0" height="281.0" rx="6"/></clipPath><path d="M1580 988 L1780 808 M1580 1032 L1780 852 M1580 1076 L1780 896 M1580 1120 L1780 940 M1580 1164 L1780 984 M1580 1208 L1780 1028 M1580 1252 L1780 1072 M1580 1296 L1780 1116 M1580 1340 L1780 1160 M1580 1384 L1780 1204 M1580 1428 L1780 1248 M1580 1472 L1780 1292 M1580 1516 L1780 1336 M1580 1560 L1780 1380 M1580 1604 L1780 1424 M1580 1648 L1780 1468 M1580 1692 L1780 1512 M1580 1736 L1780 1556 M1580 1780 L1780 1600 M1580 1824 L1780 1644 M1580 1868 L1780 1688 M1580 1912 L1780 1732 M1580 1956 L1780 1776 M1580 2000 L1780 1820 M1580 2044 L1780 1864 M1580 2088 L1780 1908 M1580 2132 L1780 1952 M1580 2176 L1780 1996 M1580 2220 L1780 2040 M1580 2264 L1780 2084 M1580 2308 L1780 2128 M1580 2352 L1780 2172 M1580 2396 L1780 2216 M1580 2440 L1780 2260 M1580 2484 L1780 2304 M1580 2528 L1780 2348 M1580 2572 L1780 2392 M1580 2616 L1780 2436 M1580 2660 L1780 2480 M1580 2704 L1780 2524 M1580 2748 L1780 2568 M1580 2792 L1780 2612 M1580 2836 L1780 2656 M1580 2880 L1780 2700 M1580 2924 L1780 2744 M1580 2968 L1780 2788 M1580 3012 L1780 2832 M1580 3056 L1780 2876" stroke="#000" stroke-width="1.6" clip-path="url(#hclip)"/><g stroke="#000" stroke-width="4"><path d="M1640 1185 L1640 1455"/><path d="M1675 1185 L1675 1385"/><path d="M1699 1240 L1699 1455"/></g><g fill="#4466dd"><path d="M1790 757L1811 748L1811 766Z"/><path d="M1789 966L1810 955L1810 977Z"/><path d="M1632 2052L1646 2042L1646 2064Z"/><path d="M2040 1865L2055 1858L2056 1876Z"/><path d="M2386 1718L2402 1712L2402 1725Z"/><path d="M2410 1893L2424 1884L2424 1902Z"/><path d="M2470 1834L2480 1828L2480 1846Z"/><path d="M1655 1409L1665 1404L1665 1415Z"/></g><g fill="#f2f200"><circle cx="1731" cy="725" r="7"/><circle cx="1931.8" cy="994" r="7"/><circle cx="1943.5" cy="1154" r="7"/><circle cx="1647.8" cy="969" r="7"/><circle cx="1713.7" cy="972" r="7"/><circle cx="1590.7" cy="1107" r="7"/><circle cx="1933" cy="1337" r="7"/><circle cx="1981.5" cy="1393" r="7"/><circle cx="2010.8" cy="1385.7" r="7"/><circle cx="2008" cy="1435.4" r="7"/><circle cx="1782.5" cy="2094" r="7"/><circle cx="1600" cy="2228" r="7"/><circle cx="2395" cy="1758" r="7"/><circle cx="2440" cy="1832" r="7"/><circle cx="2369" cy="1920" r="7"/><circle cx="2330" cy="1967" r="7"/><circle cx="2290" cy="1982" r="7"/><circle cx="1906" cy="1730" r="7"/><circle cx="2033" cy="1830" r="7"/></g><text x="1243" y="440" transform="rotate(22 1243 440)" font-size="21.5" textLength="100" lengthAdjust="spacing" fill="#5e5e5e" text-anchor="middle" dominant-baseline="central" font-family="Liberation Sans" stroke="#fff" stroke-opacity="0.85" stroke-width="3.5" paint-order="stroke">Moon·Ln</text><text x="1411" y="502" transform="rotate(-67 1411 502)" font-size="21.5" textLength="165" lengthAdjust="spacing" fill="#5e5e5e" text-anchor="middle" dominant-baseline="central" font-family="Liberation Sans" stroke="#fff" stroke-opacity="0.85" stroke-width="3.5" paint-order="stroke">S·Beulah·Rd</text><text x="1033" y="490" transform="rotate(62 1033 490)" font-size="21.5" textLength="105" lengthAdjust="spacing" fill="#5e5e5e" text-anchor="middle" dominant-baseline="central" font-family="Liberation Sans" stroke="#fff" stroke-opacity="0.85" stroke-width="3.5" paint-order="stroke">shire·Dr</text><text x="1032" y="597" transform="rotate(30 1032 597)" font-size="21.5" textLength="50" lengthAdjust="spacing" fill="#5e5e5e" text-anchor="middle" dominant-baseline="central" font-family="Liberation Sans" stroke="#fff" stroke-opacity="0.85" stroke-width="3.5" paint-order="stroke">d·Rd</text><text x="1418" y="765" transform="rotate(-26 1418 765)" font-size="21.5" textLength="141" lengthAdjust="spacing" fill="#5e5e5e" text-anchor="middle" dominant-baseline="central" font-family="Liberation Sans" stroke="#fff" stroke-opacity="0.85" stroke-width="3.5" paint-order="stroke">Bellbluff·Dr</text><text x="1488" y="961" transform="rotate(-5 1488 961)" font-size="21.5" textLength="146" lengthAdjust="spacing" fill="#5e5e5e" text-anchor="middle" dominant-baseline="central" font-family="Liberation Sans" stroke="#fff" stroke-opacity="0.85" stroke-width="3.5" paint-order="stroke">Bluffside·Dr</text><text x="1025" y="1505" transform="rotate(0 1025 1505)" font-size="21.5" textLength="32" lengthAdjust="spacing" fill="#5e5e5e" text-anchor="middle" dominant-baseline="central" font-family="Liberation Sans" stroke="#fff" stroke-opacity="0.85" stroke-width="3.5" paint-order="stroke">Dr</text><text x="1030" y="1142" transform="rotate(-32 1030 1142)" font-size="21.5" textLength="50" lengthAdjust="spacing" fill="#5e5e5e" text-anchor="middle" dominant-baseline="central" font-family="Liberation Sans" stroke="#fff" stroke-opacity="0.85" stroke-width="3.5" paint-order="stroke">e·Dr</text><text x="1114" y="1754" transform="rotate(-80 1114 1754)" font-size="21.5" textLength="138" lengthAdjust="spacing" fill="#5e5e5e" text-anchor="middle" dominant-baseline="central" font-family="Liberation Sans" stroke="#fff" stroke-opacity="0.85" stroke-width="3.5" paint-order="stroke">Conifer·Rd</text><text x="1324" y="1884" transform="rotate(-75 1324 1884)" font-size="21.5" textLength="145" lengthAdjust="spacing" fill="#5e5e5e" text-anchor="middle" dominant-baseline="central" font-family="Liberation Sans" stroke="#fff" stroke-opacity="0.85" stroke-width="3.5" paint-order="stroke">Etching·St</text><text x="1765" y="283" transform="rotate(-88 1765 283)" font-size="21.5" textLength="137" lengthAdjust="spacing" fill="#5e5e5e" text-anchor="middle" dominant-baseline="central" font-family="Liberation Sans" stroke="#fff" stroke-opacity="0.85" stroke-width="3.5" paint-order="stroke">Strathmore</text><text x="1981" y="285" transform="rotate(6 1981 285)" font-size="22.5" textLength="137" lengthAdjust="spacing" fill="#5e5e5e" text-anchor="middle" dominant-baseline="central" font-family="Liberation Sans" stroke="#fff" stroke-opacity="0.85" stroke-width="3.5" paint-order="stroke">Dundas·Rd</text><text x="1882" y="347" transform="rotate(5 1882 347)" font-size="22.5" textLength="141" lengthAdjust="spacing" fill="#5e5e5e" text-anchor="middle" dominant-baseline="central" font-family="Liberation Sans" stroke="#fff" stroke-opacity="0.85" stroke-width="3.5" paint-order="stroke">Bensley·Rd</text><text x="2061" y="429" transform="rotate(5 2061 429)" font-size="22.5" textLength="186" lengthAdjust="spacing" fill="#5e5e5e" text-anchor="middle" dominant-baseline="central" font-family="Liberation Sans" stroke="#fff" stroke-opacity="0.85" stroke-width="3.5" paint-order="stroke">Sherbourne·Rd</text><text x="1871" y="476" transform="rotate(5 1871 476)" font-size="22.5" textLength="80" lengthAdjust="spacing" fill="#5e5e5e" text-anchor="middle" dominant-baseline="central" font-family="Liberation Sans" stroke="#fff" stroke-opacity="0.85" stroke-width="3.5" paint-order="stroke">Brentw</text><text x="1913" y="550" transform="rotate(86 1913 550)" font-size="21.5" textLength="95" lengthAdjust="spacing" fill="#5e5e5e" text-anchor="middle" dominant-baseline="central" font-family="Liberation Sans" stroke="#fff" stroke-opacity="0.85" stroke-width="3.5" paint-order="stroke">ood·Cir</text><text x="2155" y="216" transform="rotate(3 2155 216)" font-size="21.5" textLength="140" lengthAdjust="spacing" fill="#5e5e5e" text-anchor="middle" dominant-baseline="central" font-family="Liberation Sans" stroke="#fff" stroke-opacity="0.85" stroke-width="3.5" paint-order="stroke">arkdale·Rd</text><text x="2265" y="282" transform="rotate(-88 2265 282)" font-size="21.5" textLength="142" lengthAdjust="spacing" fill="#5e5e5e" text-anchor="middle" dominant-baseline="central" font-family="Liberation Sans" stroke="#fff" stroke-opacity="0.85" stroke-width="3.5" paint-order="stroke">St·George·St</text><text x="2570" y="253" transform="rotate(10 2570 253)" font-size="22.5" textLength="130" lengthAdjust="spacing" fill="#5e5e5e" text-anchor="middle" dominant-baseline="central" font-family="Liberation Sans" stroke="#fff" stroke-opacity="0.85" stroke-width="3.5" paint-order="stroke">Marina·Dr</text><text x="2529" y="295" transform="rotate(15 2529 295)" font-size="22.5" textLength="186" lengthAdjust="spacing" fill="#5e5e5e" text-anchor="middle" dominant-baseline="central" font-family="Liberation Sans" stroke="#fff" stroke-opacity="0.85" stroke-width="3.5" paint-order="stroke">Chester·Hill·Cir</text><text x="2515" y="401" transform="rotate(7 2515 401)" font-size="22.5" textLength="165" lengthAdjust="spacing" fill="#5e5e5e" text-anchor="middle" dominant-baseline="central" font-family="Liberation Sans" stroke="#fff" stroke-opacity="0.85" stroke-width="3.5" paint-order="stroke">Aberdeen·Rd</text><text x="2505" y="559" transform="rotate(-20 2505 559)" font-size="22.5" textLength="123" lengthAdjust="spacing" fill="#5e5e5e" text-anchor="middle" dominant-baseline="central" font-family="Liberation Sans" stroke="#fff" stroke-opacity="0.85" stroke-width="3.5" paint-order="stroke">Alfalfa·Ln</text><text x="2137" y="693" transform="rotate(-18 2137 693)" font-size="22.5" textLength="175" lengthAdjust="spacing" fill="#5e5e5e" text-anchor="middle" dominant-baseline="central" font-family="Liberation Sans" stroke="#fff" stroke-opacity="0.85" stroke-width="3.5" paint-order="stroke">Swineford·Rd</text><text x="2528" y="807" transform="rotate(-4 2528 807)" font-size="22.5" textLength="186" lengthAdjust="spacing" fill="#5e5e5e" text-anchor="middle" dominant-baseline="central" font-family="Liberation Sans" stroke="#fff" stroke-opacity="0.85" stroke-width="3.5" paint-order="stroke">Merriewood·Rd</text><text x="2863" y="306" transform="rotate(-64 2863 306)" font-size="21.5" textLength="179" lengthAdjust="spacing" fill="#5e5e5e" text-anchor="middle" dominant-baseline="central" font-family="Liberation Sans" stroke="#fff" stroke-opacity="0.85" stroke-width="3.5" paint-order="stroke">N·I-95·S·I-95</text><text x="2185" y="1010" transform="rotate(-13 2185 1010)" font-size="22.5" textLength="214" lengthAdjust="spacing" fill="#5e5e5e" text-anchor="middle" dominant-baseline="central" font-family="Liberation Sans" stroke="#fff" stroke-opacity="0.85" stroke-width="3.5" paint-order="stroke">Drewrys·Bluff·Rd</text><text x="2529" y="971" transform="rotate(-3 2529 971)" font-size="22.5" textLength="138" lengthAdjust="spacing" fill="#5e5e5e" text-anchor="middle" dominant-baseline="central" font-family="Liberation Sans" stroke="#fff" stroke-opacity="0.85" stroke-width="3.5" paint-order="stroke">Gwynn·Ave</text><text x="2685" y="1121" transform="rotate(-4 2685 1121)" font-size="22.5" textLength="145" lengthAdjust="spacing" fill="#5e5e5e" text-anchor="middle" dominant-baseline="central" font-family="Liberation Sans" stroke="#fff" stroke-opacity="0.85" stroke-width="3.5" paint-order="stroke">Elliham·Ave</text><text x="2270" y="1250" transform="rotate(22 2270 1250)" font-size="22.5" textLength="169" lengthAdjust="spacing" fill="#5e5e5e" text-anchor="middle" dominant-baseline="central" font-family="Liberation Sans" stroke="#fff" stroke-opacity="0.85" stroke-width="3.5" paint-order="stroke">New·Park·Rd</text><text x="2688" y="1310" transform="rotate(-15 2688 1310)" font-size="22.5" textLength="133" lengthAdjust="spacing" fill="#5e5e5e" text-anchor="middle" dominant-baseline="central" font-family="Liberation Sans" stroke="#fff" stroke-opacity="0.85" stroke-width="3.5" paint-order="stroke">Troycott·Pl</text><text x="2833" y="1228" transform="rotate(-88 2833 1228)" font-size="21.5" textLength="155" lengthAdjust="spacing" fill="#5e5e5e" text-anchor="middle" dominant-baseline="central" font-family="Liberation Sans" stroke="#fff" stroke-opacity="0.85" stroke-width="3.5" paint-order="stroke">CSX·Railroad</text><text x="2195" y="1412" transform="rotate(-18 2195 1412)" font-size="22.5" textLength="118" lengthAdjust="spacing" fill="#5e5e5e" text-anchor="middle" dominant-baseline="central" font-family="Liberation Sans" stroke="#fff" stroke-opacity="0.85" stroke-width="3.5" paint-order="stroke">Alcott·Rd</text><text x="2125" y="1466" transform="rotate(-17 2125 1466)" font-size="22.5" textLength="106" lengthAdjust="spacing" fill="#5e5e5e" text-anchor="middle" dominant-baseline="central" font-family="Liberation Sans" stroke="#fff" stroke-opacity="0.85" stroke-width="3.5" paint-order="stroke">Key·Ave</text><text x="2668" y="1437" transform="rotate(-18 2668 1437)" font-size="22.5" textLength="159" lengthAdjust="spacing" fill="#5e5e5e" text-anchor="middle" dominant-baseline="central" font-family="Liberation Sans" stroke="#fff" stroke-opacity="0.85" stroke-width="3.5" paint-order="stroke">Gayland·Ave</text><text x="2088" y="1548" transform="rotate(-15 2088 1548)" font-size="22.5" textLength="163" lengthAdjust="spacing" fill="#5e5e5e" text-anchor="middle" dominant-baseline="central" font-family="Liberation Sans" stroke="#fff" stroke-opacity="0.85" stroke-width="3.5" paint-order="stroke">Libwood·Ave</text><text x="2308" y="1496" transform="rotate(78 2308 1496)" font-size="21.5" textLength="134" lengthAdjust="spacing" fill="#5e5e5e" text-anchor="middle" dominant-baseline="central" font-family="Liberation Sans" stroke="#fff" stroke-opacity="0.85" stroke-width="3.5" paint-order="stroke">Jubra·Dr</text><text x="2445" y="1530" transform="rotate(78 2445 1530)" font-size="21.5" textLength="80" lengthAdjust="spacing" fill="#5e5e5e" text-anchor="middle" dominant-baseline="central" font-family="Liberation Sans" stroke="#fff" stroke-opacity="0.85" stroke-width="3.5" paint-order="stroke">Taw·St</text><text x="2063" y="1605" transform="rotate(-17 2063 1605)" font-size="22.5" textLength="134" lengthAdjust="spacing" fill="#5e5e5e" text-anchor="middle" dominant-baseline="central" font-family="Liberation Sans" stroke="#fff" stroke-opacity="0.85" stroke-width="3.5" paint-order="stroke">Rycliff·Ave</text><text x="2188" y="1662" transform="rotate(-21 2188 1662)" font-size="22.5" textLength="150" lengthAdjust="spacing" fill="#5e5e5e" text-anchor="middle" dominant-baseline="central" font-family="Liberation Sans" stroke="#fff" stroke-opacity="0.85" stroke-width="3.5" paint-order="stroke">Botone·Ave</text><text x="1966" y="1657" transform="rotate(78 1966 1657)" font-size="21.5" textLength="125" lengthAdjust="spacing" fill="#5e5e5e" text-anchor="middle" dominant-baseline="central" font-family="Liberation Sans" stroke="#fff" stroke-opacity="0.85" stroke-width="3.5" paint-order="stroke">Senate·St</text><text x="2118" y="1770" transform="rotate(-24 2118 1770)" font-size="22.5" textLength="188" lengthAdjust="spacing" fill="#5e5e5e" text-anchor="middle" dominant-baseline="central" font-family="Liberation Sans" stroke="#fff" stroke-opacity="0.85" stroke-width="3.5" paint-order="stroke">Congress·Rd</text><text x="2262" y="1706" transform="rotate(-24 2262 1706)" font-size="21.5" textLength="60" lengthAdjust="spacing" fill="#5e5e5e" text-anchor="middle" dominant-baseline="central" font-family="Liberation Sans" stroke="#fff" stroke-opacity="0.85" stroke-width="3.5" paint-order="stroke">H·Rd</text><text x="2656" y="1581" transform="rotate(-17 2656 1581)" font-size="22.5" textLength="92" lengthAdjust="spacing" fill="#5e5e5e" text-anchor="middle" dominant-baseline="central" font-family="Liberation Sans" stroke="#fff" stroke-opacity="0.85" stroke-width="3.5" paint-order="stroke">Noel·St</text><text x="2672" y="1690" transform="rotate(-17 2672 1690)" font-size="22.5" textLength="134" lengthAdjust="spacing" fill="#5e5e5e" text-anchor="middle" dominant-baseline="central" font-family="Liberation Sans" stroke="#fff" stroke-opacity="0.85" stroke-width="3.5" paint-order="stroke">Myron·Ave</text><text x="2671" y="1778" transform="rotate(-17 2671 1778)" font-size="22.5" textLength="142" lengthAdjust="spacing" fill="#5e5e5e" text-anchor="middle" dominant-baseline="central" font-family="Liberation Sans" stroke="#fff" stroke-opacity="0.85" stroke-width="3.5" paint-order="stroke">Dwight·Ave</text><text x="2891" y="1690" transform="rotate(68 2891 1690)" font-size="21.5" textLength="120" lengthAdjust="spacing" fill="#5e5e5e" text-anchor="middle" dominant-baseline="central" font-family="Liberation Sans" stroke="#fff" stroke-opacity="0.85" stroke-width="3.5" paint-order="stroke">Shell·Rd</text><text x="2660" y="2172" transform="rotate(74 2660 2172)" font-size="22.5" textLength="250" lengthAdjust="spacing" fill="#5e5e5e" text-anchor="middle" dominant-baseline="central" font-family="Liberation Sans" stroke="#fff" stroke-opacity="0.85" stroke-width="3.5" paint-order="stroke">Jefferson·Davis·Hw</text><text x="2868" y="2103" transform="rotate(-27 2868 2103)" font-size="22.5" textLength="115" lengthAdjust="spacing" fill="#5e5e5e" text-anchor="middle" dominant-baseline="central" font-family="Liberation Sans" stroke="#fff" stroke-opacity="0.85" stroke-width="3.5" paint-order="stroke">Bellwood</text><text x="1640" y="385" transform="rotate(62 1640 385)" font-size="20.5" textLength="60" lengthAdjust="spacing" fill="#5e5e5e" text-anchor="middle" dominant-baseline="central" font-family="Liberation Sans" stroke="#fff" stroke-opacity="0.85" stroke-width="3.5" paint-order="stroke">G·Rd</text><text x="1652" y="525" transform="rotate(0 1652 525)" font-size="21.5" textLength="100" lengthAdjust="spacing" fill="#5e5e5e" text-anchor="middle" dominant-baseline="central" font-family="Liberation Sans" stroke="#fff" stroke-opacity="0.85" stroke-width="3.5" paint-order="stroke">N·5th·St</text><text x="1721" y="741" transform="rotate(0 1721 741)" font-size="21.5" textLength="100" lengthAdjust="spacing" fill="#5e5e5e" text-anchor="middle" dominant-baseline="central" font-family="Liberation Sans" stroke="#fff" stroke-opacity="0.85" stroke-width="3.5" paint-order="stroke">N·4th·St</text><text x="1648" y="956" transform="rotate(0 1648 956)" font-size="21.5" textLength="100" lengthAdjust="spacing" fill="#5e5e5e" text-anchor="middle" dominant-baseline="central" font-family="Liberation Sans" stroke="#fff" stroke-opacity="0.85" stroke-width="3.5" paint-order="stroke">N·3rd·St</text><text x="1592" y="845" transform="rotate(-90 1592 845)" font-size="20.5" textLength="62" lengthAdjust="spacing" fill="#5e5e5e" text-anchor="middle" dominant-baseline="central" font-family="Liberation Sans" stroke="#fff" stroke-opacity="0.85" stroke-width="3.5" paint-order="stroke">A·Rd</text><text x="1649" y="845" transform="rotate(90 1649 845)" font-size="20.5" textLength="62" lengthAdjust="spacing" fill="#5e5e5e" text-anchor="middle" dominant-baseline="central" font-family="Liberation Sans" stroke="#fff" stroke-opacity="0.85" stroke-width="3.5" paint-order="stroke">B·Rd</text><text x="1775" y="955" transform="rotate(-90 1775 955)" font-size="20.5" textLength="60" lengthAdjust="spacing" fill="#5e5e5e" text-anchor="middle" dominant-baseline="central" font-family="Liberation Sans" stroke="#fff" stroke-opacity="0.85" stroke-width="3.5" paint-order="stroke">D·Rd</text><text x="1843" y="1247" transform="rotate(-90 1843 1247)" font-size="20.5" textLength="59" lengthAdjust="spacing" fill="#5e5e5e" text-anchor="middle" dominant-baseline="central" font-family="Liberation Sans" stroke="#fff" stroke-opacity="0.85" stroke-width="3.5" paint-order="stroke">F·Rd</text><text x="1687" y="1462" transform="rotate(0 1687 1462)" font-size="21.5" textLength="66" lengthAdjust="spacing" fill="#5e5e5e" text-anchor="middle" dominant-baseline="central" font-family="Liberation Sans" stroke="#fff" stroke-opacity="0.85" stroke-width="3.5" paint-order="stroke">1st·St</text><text x="1695" y="1602" transform="rotate(-90 1695 1602)" font-size="20.5" textLength="62" lengthAdjust="spacing" fill="#5e5e5e" text-anchor="middle" dominant-baseline="central" font-family="Liberation Sans" stroke="#fff" stroke-opacity="0.85" stroke-width="3.5" paint-order="stroke">C·Rd</text><text x="1800" y="1612" transform="rotate(-90 1800 1612)" font-size="20.5" textLength="62" lengthAdjust="spacing" fill="#5e5e5e" text-anchor="middle" dominant-baseline="central" font-family="Liberation Sans" stroke="#fff" stroke-opacity="0.85" stroke-width="3.5" paint-order="stroke">F·Rd</text><text x="1748" y="1743" transform="rotate(0 1748 1743)" font-size="21.5" textLength="104" lengthAdjust="spacing" fill="#5e5e5e" text-anchor="middle" dominant-baseline="central" font-family="Liberation Sans" stroke="#fff" stroke-opacity="0.85" stroke-width="3.5" paint-order="stroke">S·2nd·St</text><text x="1584" y="1724" transform="rotate(-90 1584 1724)" font-size="20.5" textLength="62" lengthAdjust="spacing" fill="#5e5e5e" text-anchor="middle" dominant-baseline="central" font-family="Liberation Sans" stroke="#fff" stroke-opacity="0.85" stroke-width="3.5" paint-order="stroke">A·Rd</text><text x="1727" y="2013" transform="rotate(0 1727 2013)" font-size="21.5" textLength="63" lengthAdjust="spacing" fill="#5e5e5e" text-anchor="middle" dominant-baseline="central" font-family="Liberation Sans" stroke="#fff" stroke-opacity="0.85" stroke-width="3.5" paint-order="stroke">M·Rd</text><text x="1788" y="2066" transform="rotate(0 1788 2066)" font-size="21.5" textLength="61" lengthAdjust="spacing" fill="#5e5e5e" text-anchor="middle" dominant-baseline="central" font-family="Liberation Sans" stroke="#fff" stroke-opacity="0.85" stroke-width="3.5" paint-order="stroke">N·Rd</text><text x="1725" y="2130" transform="rotate(0 1725 2130)" font-size="21.5" textLength="65" lengthAdjust="spacing" fill="#5e5e5e" text-anchor="middle" dominant-baseline="central" font-family="Liberation Sans" stroke="#fff" stroke-opacity="0.85" stroke-width="3.5" paint-order="stroke">O·Rd</text><text x="1720" y="2180" transform="rotate(0 1720 2180)" font-size="21.5" textLength="62" lengthAdjust="spacing" fill="#5e5e5e" text-anchor="middle" dominant-baseline="central" font-family="Liberation Sans" stroke="#fff" stroke-opacity="0.85" stroke-width="3.5" paint-order="stroke">P·Rd</text><text x="1720" y="2230" transform="rotate(0 1720 2230)" font-size="21.5" textLength="62" lengthAdjust="spacing" fill="#5e5e5e" text-anchor="middle" dominant-baseline="central" font-family="Liberation Sans" stroke="#fff" stroke-opacity="0.85" stroke-width="3.5" paint-order="stroke">Q·Rd</text><text x="1581" y="2075" transform="rotate(-90 1581 2075)" font-size="20.5" textLength="75" lengthAdjust="spacing" fill="#5e5e5e" text-anchor="middle" dominant-baseline="central" font-family="Liberation Sans" stroke="#fff" stroke-opacity="0.85" stroke-width="3.5" paint-order="stroke">9th·St</text><text x="1865" y="2075" transform="rotate(-90 1865 2075)" font-size="20.5" textLength="75" lengthAdjust="spacing" fill="#5e5e5e" text-anchor="middle" dominant-baseline="central" font-family="Liberation Sans" stroke="#fff" stroke-opacity="0.85" stroke-width="3.5" paint-order="stroke">8th·St</text><text x="1974" y="1921" transform="rotate(5 1974 1921)" font-size="21.5" textLength="73" lengthAdjust="spacing" fill="#5e5e5e" text-anchor="middle" dominant-baseline="central" font-family="Liberation Sans" stroke="#fff" stroke-opacity="0.85" stroke-width="3.5" paint-order="stroke">3rd·St</text><text x="2272" y="1764" transform="rotate(-24 2272 1764)" font-size="20.5" textLength="45" lengthAdjust="spacing" fill="#5e5e5e" text-anchor="middle" dominant-baseline="central" font-family="Liberation Sans" stroke="#fff" stroke-opacity="0.85" stroke-width="3.5" paint-order="stroke">Cen</text><text x="2242" y="1835" transform="rotate(-24 2242 1835)" font-size="20.5" textLength="58" lengthAdjust="spacing" fill="#5e5e5e" text-anchor="middle" dominant-baseline="central" font-family="Liberation Sans" stroke="#fff" stroke-opacity="0.85" stroke-width="3.5" paint-order="stroke">J·Rd</text><text x="2248" y="1890" transform="rotate(-24 2248 1890)" font-size="20.5" textLength="60" lengthAdjust="spacing" fill="#5e5e5e" text-anchor="middle" dominant-baseline="central" font-family="Liberation Sans" stroke="#fff" stroke-opacity="0.85" stroke-width="3.5" paint-order="stroke">K·Rd</text><text x="2342" y="1913" transform="rotate(-24 2342 1913)" font-size="20.5" textLength="60" lengthAdjust="spacing" fill="#5e5e5e" text-anchor="middle" dominant-baseline="central" font-family="Liberation Sans" stroke="#fff" stroke-opacity="0.85" stroke-width="3.5" paint-order="stroke">L·Rd</text><text x="2427" y="1747" transform="rotate(68 2427 1747)" font-size="20.5" textLength="60" lengthAdjust="spacing" fill="#5e5e5e" text-anchor="middle" dominant-baseline="central" font-family="Liberation Sans" stroke="#fff" stroke-opacity="0.85" stroke-width="3.5" paint-order="stroke">8th·St</text><text x="2224.5" y="411.5" font-size="43" textLength="149" lengthAdjust="spacing" fill="#3a3a3a" font-family="Liberation Serif" font-weight="bold">Bensley</text><text x="2224" y="481" font-size="31" textLength="120" lengthAdjust="spacing" fill="#3a3a3a" font-family="Liberation Serif" font-weight="bold">Bensley</text><text x="2229.3" y="522.2" font-size="31" textLength="112.6" lengthAdjust="spacing" fill="#3a3a3a" font-family="Liberation Serif" font-weight="bold">Village</text><text x="1121" y="974" font-size="30" textLength="133" lengthAdjust="spacing" fill="#3a3a3a" font-family="Liberation Serif" font-weight="bold">Drewrys</text><text x="1145" y="1012" font-size="30" textLength="82" lengthAdjust="spacing" fill="#3a3a3a" font-family="Liberation Serif" font-weight="bold">Bluff</text><text x="2387.5" y="1338" font-size="40" textLength="174" lengthAdjust="spacing" fill="#3a3a3a" font-family="Liberation Serif" font-weight="bold">Bellwood</text><text x="2575" y="354" font-size="21" fill="#6a6a6a" text-anchor="middle" dominant-baseline="central" font-family="Liberation Sans" font-style="italic">.36 m</text><text x="2572" y="1737" font-size="21" fill="#6a6a6a" text-anchor="middle" dominant-baseline="central" font-family="Liberation Sans" font-style="italic">37 m.</text><text x="2254" y="608" transform="rotate(70 2254 608)" font-size="17" fill="#8a8a80" text-anchor="middle" dominant-baseline="central" font-family="Liberation Sans" font-style="italic">100 ft</text><text x="2790" y="1750" transform="rotate(-70 2790 1750)" font-size="16" fill="#8a8a80" text-anchor="middle" dominant-baseline="central" font-family="Liberation Sans" font-style="italic">100 ft</text><g><path d="M2333 633 L2377 633 L2380 645 L2376 663 L2334 663 L2330 645Z" fill="#fff" stroke="#888" stroke-width="1.5"/><text x="2355" y="649" font-size="17" fill="#444" text-anchor="middle" dominant-baseline="central" font-family="Liberation Sans">1</text></g><g><path d="M2806 604 L2853 604 Q2856 632 2829 645 Q2803 632 2806 604Z" fill="#fff" stroke="#888" stroke-width="1.5"/><path d="M2806 604 L2853 604 L2853 612 L2806 612Z" fill="#fff" stroke="#888" stroke-width="1.2"/><text x="2829" y="626" font-size="17" fill="#444" text-anchor="middle" dominant-baseline="central" font-family="Liberation Sans">95</text></g><path d="M2570 1866 L2610 1866 L2614 1880 L2610 1898 L2570 1898 L2566 1880Z" fill="#fff" stroke="#999" stroke-width="1.5"/><rect x="1048" y="263" width="42" height="95" rx="7" fill="#9e9e9e" opacity="0.85"/><path d="M1048 310.5H1090" stroke="#222" stroke-width="1.5"/><path d="M1070 282V298M1062 290H1078M1065 333H1075" stroke="#fff" stroke-width="1.8"/></svg></div>
<svg class="abs" style="left:0;top:0" width="2917" height="2292" viewBox="0 0 2917 2292"><defs><mask id="g1" maskUnits="userSpaceOnUse" x="0" y="600" width="160" height="140"><rect x="0" y="600" width="160" height="140" fill="#fff"/><circle cx="66.40" cy="661.10" r="4.3" fill="#000"/><circle cx="84.50" cy="668.60" r="4.3" fill="#000"/><circle cx="92.00" cy="686.70" r="4.3" fill="#000"/><circle cx="84.50" cy="704.80" r="4.3" fill="#000"/><circle cx="66.40" cy="712.30" r="4.3" fill="#000"/><circle cx="48.30" cy="704.80" r="4.3" fill="#000"/><circle cx="40.80" cy="686.70" r="4.3" fill="#000"/><circle cx="48.30" cy="668.60" r="4.3" fill="#000"/><circle cx="66.4" cy="686.7" r="7.6" fill="#000"/></mask><mask id="g2" maskUnits="userSpaceOnUse" x="0" y="600" width="160" height="140"><rect x="0" y="600" width="160" height="140" fill="#fff"/><circle cx="105.10" cy="634.09" r="3.6" fill="#000"/><circle cx="115.71" cy="644.70" r="3.6" fill="#000"/><circle cx="115.71" cy="659.70" r="3.6" fill="#000"/><circle cx="105.10" cy="670.31" r="3.6" fill="#000"/><circle cx="90.10" cy="670.31" r="3.6" fill="#000"/><circle cx="79.49" cy="659.70" r="3.6" fill="#000"/><circle cx="79.49" cy="644.70" r="3.6" fill="#000"/><circle cx="90.10" cy="634.09" r="3.6" fill="#000"/><circle cx="97.6" cy="652.2" r="5.2" fill="#000"/></mask><mask id="g3" maskUnits="userSpaceOnUse" x="0" y="600" width="160" height="140"><rect x="0" y="600" width="160" height="140" fill="#fff"/><circle cx="106.30" cy="674.60" r="2.9" fill="#000"/><circle cx="116.20" cy="678.70" r="2.9" fill="#000"/><circle cx="120.30" cy="688.60" r="2.9" fill="#000"/><circle cx="116.20" cy="698.50" r="2.9" fill="#000"/><circle cx="106.30" cy="702.60" r="2.9" fill="#000"/><circle cx="96.40" cy="698.50" r="2.9" fill="#000"/><circle cx="92.30" cy="688.60" r="2.9" fill="#000"/><circle cx="96.40" cy="678.70" r="2.9" fill="#000"/><circle cx="106.3" cy="688.6" r="3.8" fill="#000"/></mask></defs><g fill="#c4c4c4"><rect x="60" y="268.4" width="35.7" height="75.6"/><rect x="64.1" y="265" width="27.1" height="4"/><rect x="73.1" y="262.6" width="2.8" height="3"/><rect x="79" y="262.6" width="2.8" height="3"/><path d="M45.3 344V279.3H49.3V275.4H57V344Z"/><path d="M110.2 344V279.3H106.2V275.4H97.9V344Z"/></g><g fill="#2e2e2e"><rect x="65.1" y="274.2" width="5.1" height="7.0"/><rect x="75.1" y="274.2" width="5.1" height="7.0"/><rect x="85.1" y="274.2" width="5.1" height="7.0"/><rect x="65.1" y="285.1" width="5.1" height="7.4"/><rect x="75.1" y="285.1" width="5.1" height="7.4"/><rect x="85.1" y="285.1" width="5.1" height="7.4"/><rect x="51.3" y="285.1" width="5.7" height="7.4"/><rect x="97.9" y="285.1" width="5.8" height="7.4"/><rect x="65.1" y="296.4" width="5.1" height="7.4"/><rect x="75.1" y="296.4" width="5.1" height="7.4"/><rect x="85.1" y="296.4" width="5.1" height="7.4"/><rect x="51.3" y="296.4" width="5.7" height="7.4"/><rect x="97.9" y="296.4" width="5.8" height="7.4"/><rect x="65.1" y="308.0" width="5.1" height="6.7"/><rect x="75.1" y="308.0" width="5.1" height="6.7"/><rect x="85.1" y="308.0" width="5.1" height="6.7"/><rect x="51.3" y="308.0" width="5.7" height="6.7"/><rect x="97.9" y="308.0" width="5.8" height="6.7"/><rect x="65.1" y="319.2" width="5.1" height="6.5"/><rect x="75.1" y="319.2" width="5.1" height="6.5"/><rect x="85.1" y="319.2" width="5.1" height="6.5"/><rect x="51.3" y="319.2" width="5.7" height="6.5"/><rect x="97.9" y="319.2" width="5.8" height="6.5"/><rect x="65.1" y="330.2" width="5.1" height="7.1"/><rect x="75.1" y="330.2" width="5.1" height="7.1"/><rect x="85.1" y="330.2" width="5.1" height="7.1"/><rect x="51.3" y="330.2" width="5.7" height="7.1"/><rect x="97.9" y="330.2" width="5.8" height="7.1"/></g><g fill="#c4c4c4">
<path d="M45.5 512V461.6A14.45 14.45 0 0 1 74.4 461.6V512Z"/>
<path d="M60.9 528.9H110.2V465.1H77.3V512.8A16.2 16.2 0 0 1 60.9 528.9Z"/>
<circle cx="60.9" cy="512.8" r="16.1"/>
</g>
<path d="M44.8 512.8A16.1 16.1 0 0 1 77 512.8" fill="none" stroke="#2e2e2e" stroke-width="2.6"/>
<path d="M65.4 499.9V523A12.2 12.2 0 0 0 65.4 499.9Z" fill="#2e2e2e"/>
<g fill="#2e2e2e"><rect x="85.1" y="478.3" width="12.9" height="2.6"/><rect x="85.1" y="492.8" width="12.9" height="2.6"/><rect x="85.1" y="507" width="12.9" height="2.6"/></g><circle cx="66.4" cy="686.7" r="24.8" fill="#c4c4c4" mask="url(#g1)"/>
<circle cx="97.6" cy="652.2" r="21.5" fill="#2e2e2e"/>
<circle cx="97.6" cy="652.2" r="18.8" fill="#c4c4c4" mask="url(#g2)"/>
<circle cx="106.3" cy="688.6" r="15.9" fill="#2e2e2e"/>
<circle cx="106.3" cy="688.6" r="13.2" fill="#c4c4c4" mask="url(#g3)"/><clipPath id="lowc"><rect x="0" y="852.6" width="160" height="60"/></clipPath>
<path d="M37.3 847.3A45.2 45.2 0 0 1 110.5 828.6L114.6 824.2L124 844.7L102.1 841.7L104.2 836.6A34.5 34.5 0 0 0 49.9 848.2Z" fill="#c4c4c4"/>
<g clip-path="url(#lowc)">
<circle cx="81.7" cy="862.4" r="45.2" fill="#c4c4c4"/>
<path d="M37 853C62 853 86 866 90 908L96 908C94 880 90 869 86 864C98 857 112 853 128 852.5V850H37Z" fill="#2e2e2e"/>
<path d="M46.5 864.3C66 866 80 875 80.2 897.9C62 896 48 884 46.5 864.3Z" fill="#2e2e2e"/>
<path d="M115.2 859.9C103 864 94 870 91.3 877.4L92.5 890C97 875 105 866 115.2 859.9Z" fill="#2e2e2e"/>
</g><circle cx="82" cy="1043.4" r="42.2" fill="#d4ae3e"/>
<circle cx="81.7" cy="1023.7" r="6.5" fill="#808080"/>
<rect x="75.2" y="1033.5" width="12.9" height="36.1" fill="#808080"/><g>
<path d="M141.9 23C108 23 84 50 79 85C76 105 77 125 80 136L85 131L87 151L97 152L100 146H184L187 152L197 151L199 131L204 136C207 125 208 105 205 85C200 50 176 23 141.9 23Z" fill="#d2b165"/>
<path d="M141.9 36C114 36 96 58 92 88C90 108 92 130 97 147H187C192 130 194 108 192 88C188 58 170 36 141.9 36Z" fill="#2e9bd2"/>
<path d="M96 80C100 56 118 32 141.9 31C166 32 184 56 188 80" fill="none" stroke="#a5883f" stroke-width="5" stroke-dasharray="4 3" opacity="0.8"/>
<path d="M85 100C84 112 85 122 88 130M199 100C200 112 199 122 196 130" fill="none" stroke="#a5883f" stroke-width="5" stroke-dasharray="4 3" opacity="0.8"/>
<g fill="#d8a53a"><circle cx="129.2" cy="46.6" r="2.6"/><circle cx="141.4" cy="44.5" r="2.6"/><circle cx="153" cy="46.6" r="2.6"/><circle cx="119.8" cy="54" r="2.6"/><circle cx="163.5" cy="54" r="2.6"/><circle cx="112.4" cy="84.6" r="2.6"/><circle cx="170.4" cy="84.6" r="2.6"/><circle cx="99.7" cy="97.2" r="2.6"/><circle cx="112.4" cy="97.2" r="2.6"/><circle cx="169.8" cy="97.2" r="2.6"/><circle cx="182.5" cy="97.2" r="2.6"/><circle cx="97.1" cy="109.9" r="2.6"/><circle cx="186.2" cy="109.9" r="2.6"/></g>
<path d="M126 104A15.9 15.9 0 0 1 157.8 104Z" fill="#f3f0e6"/>
<path d="M88.7 60C104 58 122 59 132 63L137 70H147L152 63C162 59 180 58 195 60C190 65 178 70 166 73C158 76 154 80 152 86L151.4 104.6H132.4L132 86C130 80 126 76 118 73C106 70 94 65 88.7 60Z" fill="#8f7242"/><path d="M96 64C108 66 120 68 128 72M188 64C176 66 164 68 156 72" stroke="#6f5530" stroke-width="1.5" fill="none"/><path d="M133.5 72C133 62 138 58 147 58C146 64 148 70 147 72Z" fill="#f4f2ea"/>
<rect x="106" y="104" width="71.7" height="26.4" fill="#0f1b6e"/>
<path d="M106 130.4H177.7V167.8C177.7 176 162 183 141.85 185.8C122 183 106 176 106 167.8Z" fill="#efe1ad"/>
<clipPath id="shc"><path d="M106 130.4H177.7V167.8C177.7 176 162 183 141.85 185.8C122 183 106 176 106 167.8Z"/></clipPath>
<g fill="#b9283d" clip-path="url(#shc)"><rect x="111.52" y="130.4" width="5.515" height="56"/><rect x="122.55" y="130.4" width="5.515" height="56"/><rect x="133.57" y="130.4" width="5.515" height="56"/><rect x="144.60" y="130.4" width="5.515" height="56"/><rect x="155.63" y="130.4" width="5.515" height="56"/><rect x="166.66" y="130.4" width="5.515" height="56"/></g></g><path d="M455 2049L439 2067.5L455 2086" fill="none" stroke="#fff" stroke-width="6.5" stroke-linecap="round" stroke-linejoin="round"/>
<path d="M933 2202L907 2228L933 2254M971 2202L945 2228L971 2254" fill="none" stroke="#fff" stroke-width="7.5" stroke-linecap="round" stroke-linejoin="round"/><polygon points="320.5,293.8 331,306.3 320.5,318.3" fill="#006b99"/>
<g transform="translate(258.3 0) scale(1.06 1) translate(-258.3 0)"><polygon points="258.3,269.2 293.5,294.8 280.0,336.1 236.6,336.1 223.1,294.8" fill="#fff"/>
<polygon points="258.3,271.9 290.9,295.6 278.5,333.9 238.1,333.9 225.7,295.6" fill="#d4ae3e"/>
<polygon points="258.3,284.5 278.9,299.5 271.1,323.8 245.5,323.8 237.7,299.5" fill="#fff"/>
<polygon points="258.3,287.0 276.6,300.3 269.6,321.7 247.0,321.7 240.0,300.3" fill="#006b99"/></g><circle cx="283.4" cy="440.9" r="23.8" fill="none" stroke="#fff" stroke-width="5.4"/>
<path d="M270.5 440.9H296.3M283.4 428V453.8" stroke="#fff" stroke-width="5.4" stroke-linecap="round"/>
<circle cx="288.5" cy="574.5" r="23" fill="none" stroke="#fff" stroke-width="5.2"/>
<path d="M277 574.5H300" stroke="#fff" stroke-width="5.2" stroke-linecap="round"/><polygon points="410,697 294,755.5 334,762.5 305,786 323,801 343,779 351,816" fill="none" stroke="#dfb443" stroke-width="6.5" stroke-linejoin="miter" stroke-miterlimit="10"/><g fill="#c4c4c4">
<g transform="translate(2312.1,129.9) rotate(-45)">
<path d="M0 0L11 -6V6Z"/><rect x="13.5" y="-6" width="34" height="12"/><rect x="50" y="-6" width="11.5" height="12" rx="3"/>
</g>
<g transform="translate(2433.3,107.7) rotate(-57.1)">
<rect x="-27" y="-10.2" width="54" height="20.4" rx="2"/>
</g>
<rect x="2533.8" y="79.3" width="27.8" height="11.5" rx="3"/>
<path d="M2523 92.1H2572.9A3 3 0 0 1 2575.9 95.1V119A3 3 0 0 1 2572.9 122H2563.8V108.8H2531.7V122H2523A3 3 0 0 1 2520 119V95.1A3 3 0 0 1 2523 92.1Z"/>
<rect x="2533.8" y="110.6" width="27.8" height="24.7" rx="3"/>
</g>
<circle cx="2527.8" cy="100.4" r="2.3" fill="#1b1b1b"/>
<g fill="#1b1b1b"><rect x="2539.5" y="116.9" width="16.9" height="1.9"/><rect x="2539.5" y="122.5" width="16.9" height="1.9"/><rect x="2539.5" y="127.6" width="16.9" height="1.9"/></g>
<g transform="translate(2433.3,107.7) rotate(-57.1)" stroke="#1b1b1b" stroke-width="1.9">
<path d="M21 10.2V5.6M14 10.2V2.2M7 10.2V5.6M0 10.2V2.2M-7 10.2V5.6M-14 10.2V2.2M-21 10.2V5.6"/>
</g>
<circle cx="1779.5" cy="101.5" r="8.8" fill="none" stroke="#fff" stroke-width="3.6"/>
<path d="M1786.5 108.5L1796 117" stroke="#fff" stroke-width="4.2" stroke-linecap="round"/></svg>
</body></html>
